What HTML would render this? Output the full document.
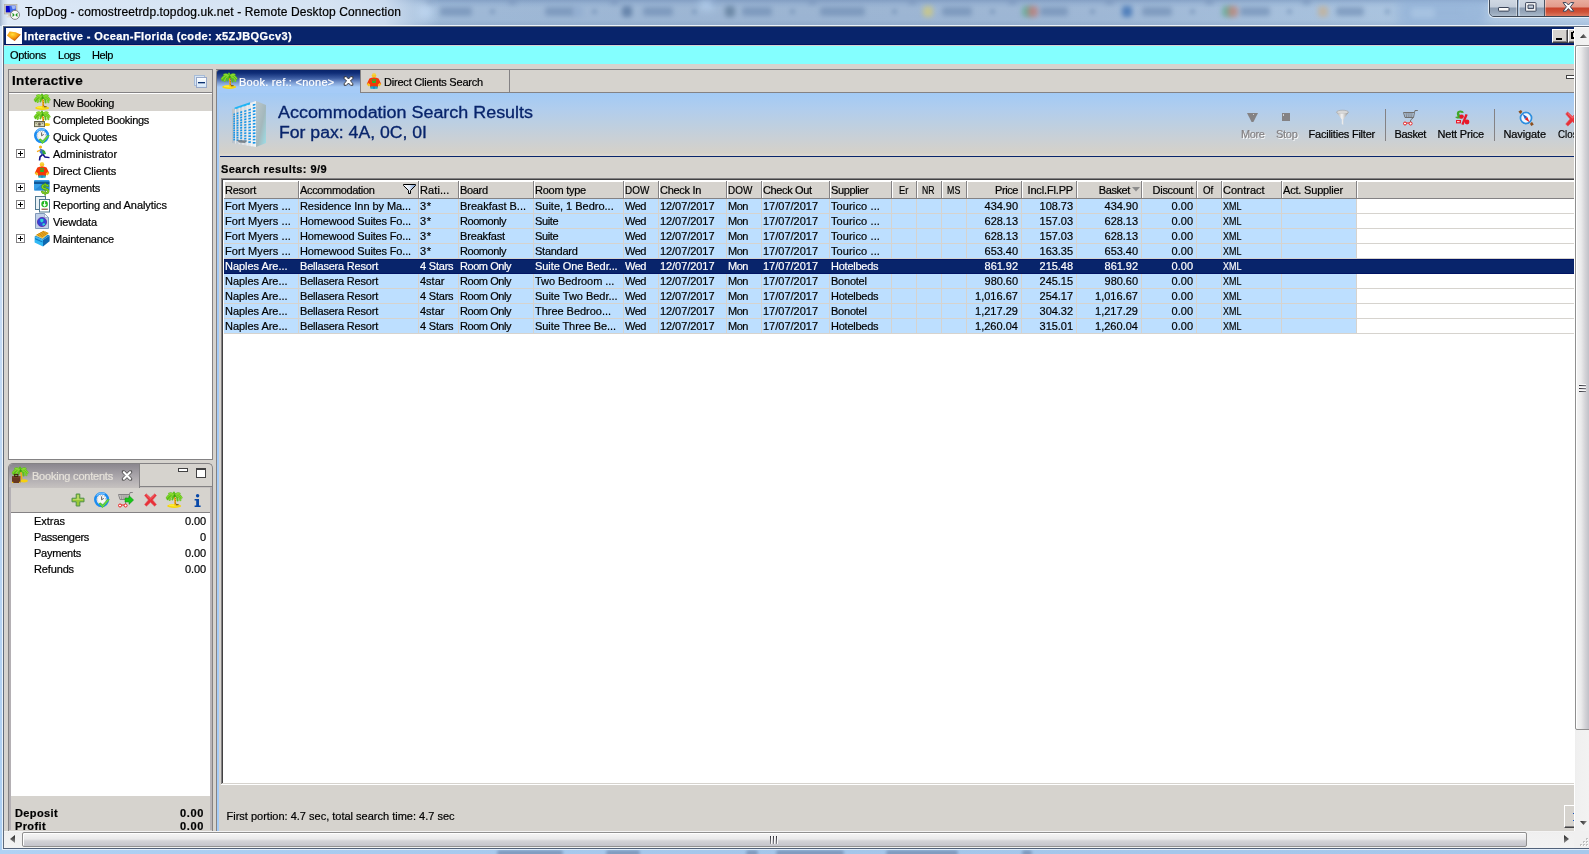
<!DOCTYPE html>
<html>
<head>
<meta charset="utf-8">
<title>TopDog</title>
<style>
*{box-sizing:border-box;margin:0;padding:0}
html,body{width:1589px;height:854px;overflow:hidden}
body{font-family:"Liberation Sans",sans-serif;font-size:11px;color:#000;background:#b4d0ee;position:relative}
#root{position:absolute;left:0;top:0;width:1589px;height:854px;overflow:hidden;will-change:transform}
.abs{position:absolute}
svg{overflow:visible}
.t{position:absolute;white-space:nowrap;line-height:14px;-webkit-text-stroke:.2px currentColor}
.btn3d{background:#d6d3ce;border:1px solid;border-color:#fff #424142 #424142 #fff;box-shadow:inset -1px -1px 0 #848284}
#aero{left:0;top:0;width:1589px;height:854px;background:linear-gradient(90deg,#b3d2f0 0px,#a9c8ea 60px,#a2bedc 300px,#9ab5d4 480px,#97b1d0 800px,#9ab4d3 1100px,#a4bfdc 1350px,#b0c9e4 1589px)}
</style>
</head>
<body>
<div id="root">
<div id="aero" class="abs"></div>
<div class="abs" style="left:0;top:0;width:1589px;height:26px;overflow:hidden">
<div class="abs" style="left:0;top:0;width:1589px;height:26px;background:linear-gradient(180deg,rgba(80,110,160,.28) 0,rgba(120,150,195,.10) 4px,rgba(255,255,255,.05) 8px,rgba(255,255,255,.04) 20px,rgba(90,120,165,.10) 25px)"></div>
<div class="abs" style="left:440px;top:7px;width:32px;height:9px;background:#6a88b0;filter:blur(2.6px);opacity:0.6;border-radius:3px"></div>
<div class="abs" style="left:545px;top:7px;width:30px;height:9px;background:#6a88b0;filter:blur(2.6px);opacity:0.6;border-radius:3px"></div>
<div class="abs" style="left:643px;top:7px;width:30px;height:9px;background:#6a88b0;filter:blur(2.6px);opacity:0.6;border-radius:3px"></div>
<div class="abs" style="left:742px;top:7px;width:30px;height:9px;background:#6a88b0;filter:blur(2.6px);opacity:0.6;border-radius:3px"></div>
<div class="abs" style="left:820px;top:7px;width:45px;height:9px;background:#6a88b0;filter:blur(2.6px);opacity:0.6;border-radius:3px"></div>
<div class="abs" style="left:942px;top:7px;width:30px;height:9px;background:#6a88b0;filter:blur(2.6px);opacity:0.6;border-radius:3px"></div>
<div class="abs" style="left:1040px;top:7px;width:28px;height:9px;background:#6a88b0;filter:blur(2.6px);opacity:0.6;border-radius:3px"></div>
<div class="abs" style="left:1142px;top:7px;width:30px;height:9px;background:#6a88b0;filter:blur(2.6px);opacity:0.6;border-radius:3px"></div>
<div class="abs" style="left:1240px;top:7px;width:30px;height:9px;background:#6a88b0;filter:blur(2.6px);opacity:0.6;border-radius:3px"></div>
<div class="abs" style="left:1336px;top:7px;width:28px;height:9px;background:#6a88b0;filter:blur(2.6px);opacity:0.6;border-radius:3px"></div>
<div class="abs" style="left:490px;top:9px;width:5px;height:5px;background:#5a7aa4;filter:blur(2px);opacity:0.45;border-radius:3px"></div>
<div class="abs" style="left:592px;top:9px;width:5px;height:5px;background:#5a7aa4;filter:blur(2px);opacity:0.45;border-radius:3px"></div>
<div class="abs" style="left:692px;top:9px;width:5px;height:5px;background:#5a7aa4;filter:blur(2px);opacity:0.45;border-radius:3px"></div>
<div class="abs" style="left:790px;top:9px;width:5px;height:5px;background:#5a7aa4;filter:blur(2px);opacity:0.45;border-radius:3px"></div>
<div class="abs" style="left:892px;top:9px;width:5px;height:5px;background:#5a7aa4;filter:blur(2px);opacity:0.45;border-radius:3px"></div>
<div class="abs" style="left:990px;top:9px;width:5px;height:5px;background:#5a7aa4;filter:blur(2px);opacity:0.45;border-radius:3px"></div>
<div class="abs" style="left:1090px;top:9px;width:5px;height:5px;background:#5a7aa4;filter:blur(2px);opacity:0.45;border-radius:3px"></div>
<div class="abs" style="left:1190px;top:9px;width:5px;height:5px;background:#5a7aa4;filter:blur(2px);opacity:0.45;border-radius:3px"></div>
<div class="abs" style="left:1287px;top:9px;width:5px;height:5px;background:#5a7aa4;filter:blur(2px);opacity:0.45;border-radius:3px"></div>
<div class="abs" style="left:1385px;top:9px;width:5px;height:5px;background:#5a7aa4;filter:blur(2px);opacity:0.45;border-radius:3px"></div>
<div class="abs" style="left:573px;top:6px;width:10px;height:11px;background:#90acd0;filter:blur(2.6px);opacity:0.7;border-radius:3px"></div>
<div class="abs" style="left:622px;top:6px;width:10px;height:11px;background:#50709a;filter:blur(2.6px);opacity:0.7;border-radius:3px"></div>
<div class="abs" style="left:725px;top:6px;width:10px;height:11px;background:#5a7896;filter:blur(2.6px);opacity:0.7;border-radius:3px"></div>
<div class="abs" style="left:923px;top:6px;width:10px;height:11px;background:#d4cc78;filter:blur(2.6px);opacity:0.7;border-radius:3px"></div>
<div class="abs" style="left:1022px;top:6px;width:10px;height:11px;background:#62a88a;filter:blur(2.6px);opacity:0.7;border-radius:3px"></div>
<div class="abs" style="left:1028px;top:6px;width:10px;height:11px;background:#c07870;filter:blur(2.6px);opacity:0.7;border-radius:3px"></div>
<div class="abs" style="left:1122px;top:6px;width:10px;height:11px;background:#3068b0;filter:blur(2.6px);opacity:0.7;border-radius:3px"></div>
<div class="abs" style="left:1222px;top:6px;width:10px;height:11px;background:#62a88a;filter:blur(2.6px);opacity:0.7;border-radius:3px"></div>
<div class="abs" style="left:1228px;top:6px;width:10px;height:11px;background:#c08070;filter:blur(2.6px);opacity:0.7;border-radius:3px"></div>
<div class="abs" style="left:1318px;top:6px;width:10px;height:11px;background:#c8b090;filter:blur(2.6px);opacity:0.7;border-radius:3px"></div>
<div class="abs" style="left:425px;top:-4px;width:9px;height:9px;background:#7f9abf;filter:blur(2.5px);opacity:0.7;border-radius:3px"></div>
<div class="abs" style="left:508px;top:-4px;width:9px;height:9px;background:#7f9abf;filter:blur(2.5px);opacity:0.7;border-radius:3px"></div>
<div class="abs" style="left:610px;top:-4px;width:9px;height:9px;background:#7f9abf;filter:blur(2.5px);opacity:0.7;border-radius:3px"></div>
<div class="abs" style="left:708px;top:-4px;width:9px;height:9px;background:#7f9abf;filter:blur(2.5px);opacity:0.7;border-radius:3px"></div>
<div class="abs" style="left:808px;top:-4px;width:9px;height:9px;background:#7f9abf;filter:blur(2.5px);opacity:0.7;border-radius:3px"></div>
<div class="abs" style="left:908px;top:-4px;width:9px;height:9px;background:#7f9abf;filter:blur(2.5px);opacity:0.7;border-radius:3px"></div>
<div class="abs" style="left:1008px;top:-4px;width:9px;height:9px;background:#7f9abf;filter:blur(2.5px);opacity:0.7;border-radius:3px"></div>
<div class="abs" style="left:1105px;top:-4px;width:9px;height:9px;background:#7f9abf;filter:blur(2.5px);opacity:0.7;border-radius:3px"></div>
<div class="abs" style="left:1205px;top:-4px;width:9px;height:9px;background:#7f9abf;filter:blur(2.5px);opacity:0.7;border-radius:3px"></div>
<div class="abs" style="left:1302px;top:-4px;width:9px;height:9px;background:#7f9abf;filter:blur(2.5px);opacity:0.7;border-radius:3px"></div>
<div class="abs" style="left:418px;top:6px;width:14px;height:12px;background:#c0daf6;filter:blur(4px);opacity:0.8;border-radius:3px"></div>
<div class="abs" style="left:700px;top:0px;width:14px;height:10px;background:#bcd8f6;filter:blur(4px);opacity:0.7;border-radius:3px"></div>
<div class="abs" style="left:1398px;top:-2px;width:88px;height:30px;background:#88aad4;filter:blur(6px);opacity:0.55;border-radius:3px"></div>
<div class="abs" style="left:1411px;top:8px;width:24px;height:10px;background:#a8c4e2;filter:blur(2.5px);opacity:0.9;border-radius:3px"></div>
<div class="abs" style="left:1462px;top:7px;width:18px;height:9px;background:#9cbadc;filter:blur(3px);opacity:0.7;border-radius:3px"></div>
<div class="abs" style="left:0;top:0;width:470px;height:26px;background:linear-gradient(90deg,rgba(226,236,248,.97) 0,rgba(220,232,246,.95) 60px,rgba(216,229,244,.95) 330px,rgba(212,226,243,.85) 385px,rgba(205,222,241,.4) 415px,rgba(200,218,240,0) 440px)"></div>
<div class="abs" style="left:0;top:0;width:8px;height:26px;background:linear-gradient(90deg,rgba(110,135,170,.55) 0,rgba(130,155,190,.25) 3px,rgba(140,165,200,0) 8px)"></div>
</div>
<svg class="abs" style="left:4px;top:4px;" width="17" height="17" viewBox="0 0 17 17"><rect x=".5" y=".5" width="12.4" height="9.4" fill="#d8d4c4" stroke="#b4b0a4" stroke-width=".8"/><rect x="1.8" y="1.8" width="9.8" height="6.6" fill="#0808c8"/><path d="M5.4 1.8 L11.6 1.8 L11.6 6 L7.4 8.4 L6.2 8.4Z" fill="#4068e8"/><path d="M7.4 1.8 L11.6 1.8 L11.6 4.4 L8.6 5.2Z" fill="#a0b8f8"/><rect x="4.4" y="10" width="3.4" height="2.2" fill="#c8c4b8"/><rect x="2.6" y="12.2" width="6" height="1.2" fill="#dcd8cc"/><circle cx="11" cy="10.9" r="4.5" fill="#f8f8f8" stroke="#848284" stroke-width="1"/><path d="M8.5 9.5 L9.9 10.9 L8.5 12.3 M13.5 9.5 L12.1 10.9 L13.5 12.3" fill="none" stroke="#189018" stroke-width="1.1"/></svg>
<div class="t" id="t1" style="top:4.84px;left:25px;font-size:12px;line-height:14px;letter-spacing:0.111px;">TopDog - comostreetrdp.topdog.uk.net - Remote Desktop Connection</div>
<div class="abs" style="left:1489px;top:-4px;width:104px;height:21px;border:1px solid #3c4654;border-radius:0 0 0 5px;box-shadow:0 0 0 1px rgba(255,255,255,.65);overflow:hidden"><div class="abs" style="left:0;top:0;width:28px;height:20px;background:linear-gradient(180deg,#d4dce6 0,#c4cedb 10px,#8c9db2 11px,#9aaabd 16px,#b4c2d2 20px);border-right:1px solid #4a5666;box-shadow:inset -1px 0 0 rgba(255,255,255,.4)"></div><div class="abs" style="left:29px;top:0;width:26px;height:20px;background:linear-gradient(180deg,#d4dce6 0,#c4cedb 10px,#8c9db2 11px,#9aaabd 16px,#b4c2d2 20px);border-right:1px solid #4a5666;box-shadow:inset 1px 0 0 rgba(255,255,255,.4)"></div><div class="abs" style="left:55px;top:0;width:50px;height:20px;background:linear-gradient(180deg,#eab5a8 0,#e39a8a 10px,#c9432c 11px,#cf5238 15px,#e0836a 20px);box-shadow:inset 1px 0 0 rgba(255,255,255,.4)"></div></div>
<svg class="abs" style="left:1498px;top:7px;" width="12" height="5" viewBox="0 0 12 5"><rect x=".5" y=".5" width="10.5" height="3.6" rx=".6" fill="#fbfbfb" stroke="#3a4458" stroke-width="1"/></svg>
<svg class="abs" style="left:1525px;top:2px;" width="12" height="10" viewBox="0 0 12 10"><path d="M.6 1.2 Q.6 .6 1.2 .6 L10.4 .6 Q11 .6 11 1.2 L11 8.6 Q11 9.2 10.4 9.2 L1.2 9.2 Q.6 9.2 .6 8.6Z M3 3 L3 6.6 L8.6 6.6 L8.6 3Z" fill="#fbfbfb" fill-rule="evenodd" stroke="#3a4458" stroke-width="1"/></svg>
<svg class="abs" style="left:1562px;top:2px;" width="13" height="10" viewBox="0 0 13 10"><path d="M1 .6 L4.2 .6 L6.4 3 L8.6 .6 L11.8 .6 L8.4 4.8 L11.8 9.2 L8.6 9.2 L6.4 6.6 L4.2 9.2 L1 9.2 L4.4 4.8Z" fill="#fbfbfb" stroke="#3a4458" stroke-width="1" stroke-linejoin="round"/></svg>
<div class="abs " style="left:0px;top:26px;width:3px;height:824px;background:linear-gradient(180deg,#d6e4f6 0,#cfe0f5 120px,#bcd6f3 450px,#aacdf1 824px);"></div>
<div class="abs " style="left:2px;top:25px;width:1px;height:824px;background:rgba(255,255,255,.75);"></div>
<div class="abs " style="left:3px;top:26px;width:1px;height:823px;background:#5f6b7c;"></div>
<div class="abs " style="left:2px;top:25px;width:1587px;height:1px;background:rgba(245,250,255,.9);"></div>
<div class="abs " style="left:3px;top:26px;width:1586px;height:1px;background:#5f6b7c;"></div>
<div class="abs " style="left:3px;top:848px;width:1586px;height:1px;background:#52627a;"></div>
<div class="abs " style="left:2px;top:849px;width:1587px;height:1px;background:rgba(235,245,255,.85);"></div>
<div class="abs" style="left:0;top:850px;width:1589px;height:4px;overflow:hidden;background:linear-gradient(90deg,#b0d2f4 0,#a9ccf0 300px,#a4c6ea 800px,#a6c8ec 1589px)">
<div class="abs" style="left:497px;top:0px;width:66px;height:6px;background:#7690b4;filter:blur(1.8px);opacity:0.8;border-radius:3px"></div>
<div class="abs" style="left:606px;top:0px;width:34px;height:6px;background:#7690b4;filter:blur(1.8px);opacity:0.8;border-radius:3px"></div>
<div class="abs" style="left:746px;top:0px;width:12px;height:6px;background:#7690b4;filter:blur(1.8px);opacity:0.8;border-radius:3px"></div>
<div class="abs" style="left:776px;top:0px;width:68px;height:6px;background:#7690b4;filter:blur(1.8px);opacity:0.8;border-radius:3px"></div>
<div class="abs" style="left:886px;top:0px;width:72px;height:6px;background:#7690b4;filter:blur(1.8px);opacity:0.8;border-radius:3px"></div>
<div class="abs" style="left:1022px;top:0px;width:10px;height:6px;background:#7690b4;filter:blur(1.8px);opacity:0.8;border-radius:3px"></div>
</div>
<div class="abs " style="left:4px;top:27px;width:1570px;height:18px;background:#08246b;"></div>
<div class="abs " style="left:6px;top:28px;width:16px;height:16px;background:#fff;"></div>
<svg class="abs" style="left:6px;top:28px;" width="16" height="16" viewBox="0 0 16 16"><defs><radialGradient id="og" cx=".4" cy=".3" r=".7"><stop offset="0" stop-color="#ffe040"/><stop offset=".5" stop-color="#f8a010"/><stop offset="1" stop-color="#c85808"/></radialGradient></defs><path d="M1 7.6 L3.6 3.6 L9.6 4.2 L14.8 6.6 L8.6 13 Q6 11.8 1 7.6Z" fill="url(#og)"/><path d="M8.6 13 L14.8 6.6 L11 9 Z" fill="#b84808" opacity=".6"/></svg>
<div class="t" id="t2" style="top:29.19px;left:24px;font-weight:bold;color:#fff;letter-spacing:0.391px;-webkit-text-stroke:.25px #fff;">Interactive - Ocean-Florida (code: x5ZJBQGcv3)</div>
<div class="abs btn3d" style="left:1552px;top:29px;width:16px;height:14px"></div>
<div class="abs " style="left:1556px;top:38px;width:6px;height:2px;background:#000;"></div>
<div class="abs" style="left:1568px;top:29px;width:6px;height:14px;overflow:hidden"><div class="abs btn3d" style="left:0;top:0;width:15px;height:14px"></div></div>
<div class="abs " style="left:1571px;top:32px;width:2px;height:7px;background:#000;"></div>
<div class="abs " style="left:1571px;top:37px;width:3px;height:2px;background:#000;"></div>
<div class="abs " style="left:1573px;top:31px;width:1px;height:2px;background:#000;"></div>
<div class="abs " style="left:4px;top:44px;width:1570px;height:1px;background:#001463;"></div>
<div class="abs " style="left:4px;top:45px;width:1570px;height:1px;background:#d6d3ce;"></div>
<div class="abs " style="left:4px;top:46px;width:1570px;height:18px;background:#84ffff;"></div>
<div class="t" id="t3" style="top:48.19px;left:10px;letter-spacing:-0.275px;">Options</div>
<div class="t" id="t4" style="top:48.19px;left:58px;letter-spacing:-0.465px;">Logs</div>
<div class="t" id="t5" style="top:48.19px;left:92px;letter-spacing:-0.406px;">Help</div>
<div class="abs " style="left:4px;top:64px;width:1570px;height:767px;background:#d6d3ce;"></div>
<div class="abs " style="left:8px;top:69px;width:205px;height:391px;background:#d6d3ce;border:1px solid #848284;"></div>
<div class="abs " style="left:9px;top:92px;width:203px;height:1px;background:#848284;"></div>
<div class="abs " style="left:9px;top:93px;width:203px;height:366px;background:#fff;"></div>
<div class="t" id="t6" style="top:73.32px;left:12px;font-size:13.5px;line-height:16px;font-weight:bold;letter-spacing:0.314px;">Interactive</div>
<div class="abs " style="left:194px;top:75px;width:11px;height:11px;background:#d8e6f4;border:1px solid #a8bcd8;"></div>
<div class="abs " style="left:196px;top:77px;width:11px;height:11px;background:linear-gradient(180deg,#fff,#d4e6f8);border:1px solid #98a8c8;"></div>
<div class="abs " style="left:198px;top:82px;width:7px;height:1px;background:#0a3070;box-shadow:0 1px 0 rgba(10,48,112,.35);"></div>
<div class="abs " style="left:9px;top:94px;width:203px;height:17px;background:#d6d3ce;"></div>
<svg class="abs" style="left:34px;top:94px;" width="16" height="16" viewBox="0 0 16 16"><ellipse cx="8.2" cy="14" rx="7" ry="1.9" fill="#f6d410"/><ellipse cx="8" cy="13.3" rx="5.2" ry="1.1" fill="#ffec30"/><path d="M7.4 4 Q8.6 8 8.4 13.4 L10.2 13.4 Q10.4 8 9 4Z" fill="#f0b010"/><path d="M8.6 5.6 L9.6 6.8 M8.8 8.2 L10 9.2 M8.8 10.8 L10.2 11.6" stroke="#b05808" stroke-width=".9"/><rect x="10" y="12.3" width="2.6" height="1" fill="#583808"/><g fill="none" stroke="#5cc018" stroke-width="2" stroke-linecap="round"><path d="M8.5 3.6 Q4 .6 .8 5.8"/><path d="M8.5 3.6 Q4.6 2.6 3.6 8"/><path d="M8.5 3.8 Q7 4.4 6.4 7.4"/><path d="M8.5 3.8 Q11.6 3 11.6 8.6"/><path d="M8.5 3.6 Q13 .6 15.6 5.6"/><path d="M8.5 3.6 Q14 3.4 14.4 8.2"/><path d="M8.5 3.4 Q6 .2 3.2 1.6"/><path d="M8.5 3.4 Q11 .2 13.6 1.6"/><path d="M8.5 3.4 Q8.6 1.4 8 .6"/><path d="M8.5 3.6 Q2.6 3.4 1.6 7.2"/></g><g fill="none" stroke="#96e038" stroke-width=".9" stroke-linecap="round"><path d="M8.5 3.6 Q4 .6 .8 5.8"/><path d="M8.5 3.6 Q4.6 2.6 3.6 8"/><path d="M8.5 3.6 Q13 .6 15.6 5.6"/><path d="M8.5 3.6 Q14 3.4 14.4 8.2"/><path d="M8.5 3.4 Q6 .2 3.2 1.6"/><path d="M8.5 3.4 Q11 .2 13.6 1.6"/></g><circle cx="8.6" cy="3.8" r="1.2" fill="#3c9c10"/></svg>
<div class="t" id="t7" style="top:96.19px;left:53px;letter-spacing:-0.348px;">New Booking</div>
<svg class="abs" style="left:34px;top:111px;" width="16" height="16" viewBox="0 0 16 16"><ellipse cx="12.6" cy="13.4" rx="3.4" ry="1.5" fill="#f6d010"/><path d="M7.4 4 Q8.6 8 8.4 12 L10.2 12 Q10.4 8 9 4Z" fill="#f0b010"/><path d="M8.6 5.6 L9.6 6.8 M8.8 8.2 L10 9.2" stroke="#b05808" stroke-width=".9"/><g fill="none" stroke="#5cc018" stroke-width="2" stroke-linecap="round"><path d="M8.5 3.6 Q4 .6 .8 5.8"/><path d="M8.5 3.6 Q4.6 2.6 3.6 8"/><path d="M8.5 3.8 Q7 4.4 6.4 7.4"/><path d="M8.5 3.8 Q11.6 3 11.6 8.6"/><path d="M8.5 3.6 Q13 .6 15.6 5.6"/><path d="M8.5 3.6 Q14 3.4 14.4 8.2"/><path d="M8.5 3.4 Q6 .2 3.2 1.6"/><path d="M8.5 3.4 Q11 .2 13.6 1.6"/><path d="M8.5 3.4 Q8.6 1.4 8 .6"/><path d="M8.5 3.6 Q2.6 3.4 1.6 7.2"/></g><g fill="none" stroke="#96e038" stroke-width=".9" stroke-linecap="round"><path d="M8.5 3.6 Q4 .6 .8 5.8"/><path d="M8.5 3.6 Q4.6 2.6 3.6 8"/><path d="M8.5 3.6 Q13 .6 15.6 5.6"/><path d="M8.5 3.6 Q14 3.4 14.4 8.2"/><path d="M8.5 3.4 Q6 .2 3.2 1.6"/><path d="M8.5 3.4 Q11 .2 13.6 1.6"/></g><circle cx="8.6" cy="3.8" r="1.2" fill="#3c9c10"/><rect x=".5" y="10.6" width="10" height="5" fill="#d4d4b4" stroke="#686850" stroke-width="1"/><rect x=".5" y="10.2" width="10" height="1" fill="#585848"/><circle cx="5.4" cy="13.2" r="1.6" fill="#807868"/><circle cx="5.4" cy="13.2" r=".6" fill="#585048"/><rect x="1.6" y="12" width="1.2" height=".8" fill="#787860"/><rect x="7.8" y="12" width="1.4" height=".8" fill="#787860"/></svg>
<div class="t" id="t8" style="top:113.19px;left:53px;letter-spacing:-0.306px;">Completed Bookings</div>
<svg class="abs" style="left:34px;top:128px;" width="16" height="16" viewBox="0 0 16 16"><circle cx="7.6" cy="7.6" r="6.3" fill="#f6f6f6" stroke="#1c8cf0" stroke-width="2.6"/><path d="M2.6 3.6 A6.3 6.3 0 0 1 11 2" fill="none" stroke="#78c0ff" stroke-width="1.2"/><circle cx="7.6" cy="7.6" r="4.1" fill="none" stroke="#909090" stroke-width=".9" stroke-dasharray=".7 1.45"/><path d="M7.6 4.4 L7.6 7.8 L9.8 6.4" fill="none" stroke="#505050" stroke-width=".9"/><path d="M4.6 11.6 L8.6 16 L15.8 7.6 L13.4 7.2 L8.6 12.8 L6.6 10.6Z" fill="#48c428"/><path d="M6 11.6 L8.6 14.4 L14.4 7.8" fill="none" stroke="#8ce860" stroke-width=".7"/></svg>
<div class="t" id="t9" style="top:130.19px;left:53px;letter-spacing:-0.220px;">Quick Quotes</div>
<svg class="abs" style="left:34px;top:145px;" width="16" height="16" viewBox="0 0 16 16"><circle cx="6.5" cy="2" r="1.6" fill="#f8b818"/><path d="M6 3.5 L10 5 L11.5 9 L8 10 L5.5 7Z" fill="#3870c8"/><path d="M8 5 L11 6 L12 9 L9 9.5Z" fill="#38a838"/><path d="M6.5 5 L3 6.6" stroke="#f8a818" stroke-width="1.2"/><path d="M8.5 9.5 L6 12 L5.5 15.5" fill="none" stroke="#101088" stroke-width="1.6"/><path d="M9 9.5 L11 12 L15.5 12.6" fill="none" stroke="#101088" stroke-width="1.4"/></svg>
<div class="t" id="t10" style="top:147.19px;left:53px;letter-spacing:-0.061px;">Administrator</div>
<svg class="abs" style="left:16px;top:149px;shape-rendering:crispEdges;" width="9" height="9" viewBox="0 0 9 9"><rect x=".5" y=".5" width="8" height="8" fill="#fff" stroke="#848284" stroke-width="1"/><path d="M2 4.5 L7 4.5 M4.5 2 L4.5 7" stroke="#000" stroke-width="1"/></svg>
<svg class="abs" style="left:34px;top:162px;" width="16" height="16" viewBox="0 0 16 16"><circle cx="8" cy="2.6" r="2.3" fill="#f8c828"/><path d="M6.4 1.6 Q8 .2 9.6 1.6" fill="none" stroke="#f8e060" stroke-width=".8"/><path d="M3.4 5.6 Q8 3.4 12.6 5.6 L15.2 11 L13 12.6 L12 10.4 L12 14.6 L4 14.6 L4 10.4 L3 12.6 L.8 11Z" fill="#f43808"/><path d="M1.4 10.6 L3.6 12.8 M14.6 10.6 L12.4 12.8" stroke="#f8c020" stroke-width="2.2"/><rect x="6.2" y="6.2" width="3.6" height="3.8" fill="#28b828"/><rect x="7" y="7" width="1.6" height="1" fill="#f43808"/><rect x="4.4" y="13.4" width="7.2" height="2.4" fill="#18b0c8"/><rect x="7.4" y="13.4" width="1.2" height="2.4" fill="#2868c8"/></svg>
<div class="t" id="t11" style="top:164.19px;left:53px;letter-spacing:-0.172px;">Direct Clients</div>
<svg class="abs" style="left:34px;top:179px;" width="17" height="17" viewBox="0 0 17 17"><rect x="0" y="1" width="15.5" height="10.5" rx="1" fill="#38a0e8"/><rect x="0" y="2.6" width="15.5" height="2.4" fill="#105898"/><path d="M0 11.5 L8 5 L15.5 5 L15.5 11.5Z" fill="#2080d0" opacity=".7"/><text x="7" y="15" font-family="Liberation Sans" font-weight="bold" font-size="15" fill="#88d818" stroke="#409010" stroke-width=".5">$</text></svg>
<div class="t" id="t12" style="top:181.19px;left:53px;letter-spacing:-0.240px;">Payments</div>
<svg class="abs" style="left:16px;top:183px;shape-rendering:crispEdges;" width="9" height="9" viewBox="0 0 9 9"><rect x=".5" y=".5" width="8" height="8" fill="#fff" stroke="#848284" stroke-width="1"/><path d="M2 4.5 L7 4.5 M4.5 2 L4.5 7" stroke="#000" stroke-width="1"/></svg>
<svg class="abs" style="left:35px;top:196px;" width="16" height="17" viewBox="0 0 16 17"><rect x=".5" y=".5" width="10" height="13" fill="#e8f0f4" stroke="#507890" stroke-width="1"/><rect x="4.5" y="3.5" width="10" height="12.5" fill="#fff" stroke="#507890" stroke-width="1"/><circle cx="9.6" cy="8" r="3.3" fill="#20b820"/><path d="M9.6 5.6 L9.6 9.6 M8 8.4 L9.6 10 L11.2 8.4" fill="none" stroke="#fff" stroke-width="1.1"/><path d="M6.5 13.2 L12.8 13.2" stroke="#703018" stroke-width="1"/></svg>
<div class="t" id="t13" style="top:198.19px;left:53px;letter-spacing:-0.069px;">Reporting and Analytics</div>
<svg class="abs" style="left:16px;top:200px;shape-rendering:crispEdges;" width="9" height="9" viewBox="0 0 9 9"><rect x=".5" y=".5" width="8" height="8" fill="#fff" stroke="#848284" stroke-width="1"/><path d="M2 4.5 L7 4.5 M4.5 2 L4.5 7" stroke="#000" stroke-width="1"/></svg>
<svg class="abs" style="left:35px;top:213px;" width="16" height="17" viewBox="0 0 16 17"><path d="M.5 .5 L9.5 .5 L13.5 4.5 L13.5 15.5 L.5 15.5Z" fill="#c0d0e8" stroke="#8098b8" stroke-width="1"/><path d="M9.5 .5 L9.5 4.5 L13.5 4.5Z" fill="#f0f4f8" stroke="#8098b8" stroke-width=".6"/><circle cx="7" cy="9" r="4.6" fill="#3048d8"/><path d="M5 6.5 Q7 5 8.5 6.5 Q9 8.5 7 9.5 Q5 9 5 6.5Z M7.5 10.5 Q9.5 10 10.5 11 Q9.5 13 7.5 12.6Z" fill="#30d8d0"/><circle cx="7" cy="9" r="4.6" fill="none" stroke="#6028a8" stroke-width=".8"/></svg>
<div class="t" id="t14" style="top:215.19px;left:53px;letter-spacing:-0.133px;">Viewdata</div>
<svg class="abs" style="left:34px;top:230px;" width="16" height="17" viewBox="0 0 16 17"><path d="M.6 6.4 L9 10 L9 16.4 L.6 12.4Z" fill="#30b8f4"/><path d="M9 10 L15.6 5.4 L15.6 11.2 L9 16.4Z" fill="#0c68b0"/><path d="M.6 6.4 L8 2 L15.6 5.4 L9 10Z" fill="#1888d0"/><path d="M1.6 5.2 L9.4 .8 L15 3 L8.6 8.4Z" fill="#f8c030"/><path d="M2.6 5 L10 1.2 M4 5.8 L11.4 1.8 M5.4 6.6 L12.8 2.4 M6.8 7.4 L14 3" stroke="#c07808" stroke-width=".8"/><path d="M1.6 5.4 L8.6 8.6 L15 3.2" fill="none" stroke="#fff4b0" stroke-width=".6"/><path d="M1 8 L8.6 11.4 L8.6 12.6 L1 9.2Z" fill="#0c78c0"/></svg>
<div class="t" id="t15" style="top:232.19px;left:53px;letter-spacing:-0.182px;">Maintenance</div>
<svg class="abs" style="left:16px;top:234px;shape-rendering:crispEdges;" width="9" height="9" viewBox="0 0 9 9"><rect x=".5" y=".5" width="8" height="8" fill="#fff" stroke="#848284" stroke-width="1"/><path d="M2 4.5 L7 4.5 M4.5 2 L4.5 7" stroke="#000" stroke-width="1"/></svg>
<div class="abs " style="left:8px;top:463px;width:205px;height:368px;background:#d6d3ce;border:1px solid #848284;border-bottom:none;border-radius:5px 5px 0 0;"></div>
<div class="abs " style="left:9px;top:464px;width:131px;height:24px;background:linear-gradient(180deg,#8a868e 0,#9f9ba1 8px,#b4b0b3 16px,#c6c2c0 24px);border-radius:4px 0 0 0;border-right:1px solid #848284;"></div>
<div class="abs " style="left:140px;top:487px;width:70px;height:1px;background:#c6c2c0;"></div>
<div class="abs " style="left:140px;top:486px;width:72px;height:1px;background:#848284;"></div>
<div class="abs " style="left:9px;top:487px;width:2px;height:343px;background:#b4b0b4;"></div>
<div class="abs " style="left:210px;top:487px;width:2px;height:343px;background:#b8b4b8;"></div>
<svg class="abs" style="left:12px;top:467px;" width="16" height="16" viewBox="0 0 16 16"><ellipse cx="12" cy="13.8" rx="3.8" ry="1.6" fill="#f6d010"/><path d="M7.8 4 Q9 8 8.8 12.6 L10.4 12.6 Q10.6 8 9.2 4Z" fill="#f0b010"/><g fill="none" stroke="#5cc018" stroke-width="2" stroke-linecap="round"><path d="M8.5 3.6 Q4 .6 .8 5.8"/><path d="M8.5 3.6 Q4.6 2.6 3.6 8"/><path d="M8.5 3.8 Q7 4.4 6.4 7.4"/><path d="M8.5 3.8 Q11.6 3 11.6 8.6"/><path d="M8.5 3.6 Q13 .6 15.6 5.6"/><path d="M8.5 3.6 Q14 3.4 14.4 8.2"/><path d="M8.5 3.4 Q6 .2 3.2 1.6"/><path d="M8.5 3.4 Q11 .2 13.6 1.6"/><path d="M8.5 3.4 Q8.6 1.4 8 .6"/><path d="M8.5 3.6 Q2.6 3.4 1.6 7.2"/></g><g fill="none" stroke="#96e038" stroke-width=".9" stroke-linecap="round"><path d="M8.5 3.6 Q4 .6 .8 5.8"/><path d="M8.5 3.6 Q4.6 2.6 3.6 8"/><path d="M8.5 3.6 Q13 .6 15.6 5.6"/><path d="M8.5 3.6 Q14 3.4 14.4 8.2"/><path d="M8.5 3.4 Q6 .2 3.2 1.6"/><path d="M8.5 3.4 Q11 .2 13.6 1.6"/></g><circle cx="8.6" cy="3.8" r="1.2" fill="#3c9c10"/><rect x="0" y="9" width="8.4" height="7" rx=".8" fill="#683820"/><rect x="0" y="9" width="8.4" height="1.4" rx=".6" fill="#7c4c30"/><rect x="2.6" y="7.4" width="3.2" height="2" fill="none" stroke="#402010" stroke-width="1"/><rect x="0" y="14.8" width="1.3" height="1.2" fill="#f8d010"/><rect x="7.1" y="14.8" width="1.3" height="1.2" fill="#f8d010"/></svg>
<div class="t" id="t16" style="top:469.19px;left:32px;color:#e6e2da;letter-spacing:-0.212px;">Booking contents</div>
<svg class="abs" style="left:121px;top:470px;" width="12" height="11" viewBox="0 0 12 11"><path d="M1.4 .8 L3.6 .8 L6 3.4 L8.4 .8 L10.6 .8 L10.6 2.8 L8 5.5 L10.6 8.2 L10.6 10.2 L8.4 10.2 L6 7.6 L3.6 10.2 L1.4 10.2 L1.4 8.2 L4 5.5 L1.4 2.8Z" fill="#fff" stroke="#424142" stroke-width=".9"/></svg>
<div class="abs " style="left:178px;top:468px;width:10px;height:4px;background:#fff;border:1px solid #424142;"></div>
<div class="abs " style="left:196px;top:468px;width:10px;height:10px;background:#fff;border:1px solid #424142;border-top-width:2px;"></div>
<div class="abs " style="left:11px;top:512px;width:199px;height:1px;background:#848284;"></div>
<svg class="abs" style="left:72px;top:494px;" width="12" height="12" viewBox="0 0 12 12"><path d="M4.2 0 L7.8 0 L7.8 4.2 L12 4.2 L12 7.8 L7.8 7.8 L7.8 12 L4.2 12 L4.2 7.8 L0 7.8 L0 4.2 L4.2 4.2Z" fill="#98c838" stroke="#509048" stroke-width="1"/><path d="M5.2 1 L6.8 1 L6.8 5.2 L11 5.2 L11 6 L1 6 L1 5.2 L5.2 5.2Z" fill="#c8e078" opacity=".8"/></svg>
<svg class="abs" style="left:94px;top:492px;" width="16" height="16" viewBox="0 0 16 16"><circle cx="7.6" cy="7.6" r="6.3" fill="#f6f6f6" stroke="#1c8cf0" stroke-width="2.6"/><path d="M2.6 3.6 A6.3 6.3 0 0 1 11 2" fill="none" stroke="#78c0ff" stroke-width="1.2"/><circle cx="7.6" cy="7.6" r="4.1" fill="none" stroke="#909090" stroke-width=".9" stroke-dasharray=".7 1.45"/><path d="M7.6 4.4 L7.6 7.8 L9.8 6.4" fill="none" stroke="#505050" stroke-width=".9"/><path d="M4.6 11.6 L8.6 16 L15.8 7.6 L13.4 7.2 L8.6 12.8 L6.6 10.6Z" fill="#48c428"/><path d="M6 11.6 L8.6 14.4 L14.4 7.8" fill="none" stroke="#8ce860" stroke-width=".7"/></svg>
<svg class="abs" style="left:118px;top:492px;" width="16" height="16" viewBox="0 0 16 16"><path d="M.5 2.5 L11.5 2.5 L10.5 7.5 L2 7.5Z" fill="none" stroke="#848284" stroke-width="1"/><path d="M3 2.5 L3.4 7.5 M5 2.5 L5.2 7.5 M7 2.5 L7 7.5 M9 2.5 L8.8 7.5" stroke="#848284" stroke-width=".9"/><path d="M11.5 2.5 L12 .5 L14.8 .5 M10.5 7.5 L7.6 10 L7.6 12" fill="none" stroke="#848284" stroke-width="1"/><path d="M2.5 13 L6.5 13" stroke="#e82020" stroke-width="1"/><circle cx="2" cy="13.5" r="1.5" fill="#fff" stroke="#e82020" stroke-width="1"/><circle cx="7.6" cy="13.5" r="1.5" fill="#fff" stroke="#e82020" stroke-width="1"/><path d="M7 6 L11 6 L11 3.6 L15.6 8 L11 12.4 L11 10 L7 10Z" fill="#18c818" stroke="#108810" stroke-width=".5"/></svg>
<svg class="abs" style="left:144px;top:493px;" width="13" height="14" viewBox="0 0 13 14"><path d="M2.2 .8 L6.5 4.8 L10.8 .8 L12.4 2.6 L8.6 7 L12.4 11.4 L10.6 13.2 L6.5 9.2 L2.4 13.2 L.6 11.4 L4.4 7 L.6 2.6Z" fill="#e83038" stroke="#e05058" stroke-width=".6"/><path d="M2.4 2 L6.5 6 L10.6 2" fill="none" stroke="#f87880" stroke-width="1" opacity=".7"/></svg>
<svg class="abs" style="left:166px;top:492px;" width="16" height="16" viewBox="0 0 16 16"><ellipse cx="8.2" cy="14" rx="7" ry="1.9" fill="#f6d410"/><ellipse cx="8" cy="13.3" rx="5.2" ry="1.1" fill="#ffec30"/><path d="M7.4 4 Q8.6 8 8.4 13.4 L10.2 13.4 Q10.4 8 9 4Z" fill="#f0b010"/><path d="M8.6 5.6 L9.6 6.8 M8.8 8.2 L10 9.2 M8.8 10.8 L10.2 11.6" stroke="#b05808" stroke-width=".9"/><rect x="10" y="12.3" width="2.6" height="1" fill="#583808"/><g fill="none" stroke="#5cc018" stroke-width="2" stroke-linecap="round"><path d="M8.5 3.6 Q4 .6 .8 5.8"/><path d="M8.5 3.6 Q4.6 2.6 3.6 8"/><path d="M8.5 3.8 Q7 4.4 6.4 7.4"/><path d="M8.5 3.8 Q11.6 3 11.6 8.6"/><path d="M8.5 3.6 Q13 .6 15.6 5.6"/><path d="M8.5 3.6 Q14 3.4 14.4 8.2"/><path d="M8.5 3.4 Q6 .2 3.2 1.6"/><path d="M8.5 3.4 Q11 .2 13.6 1.6"/><path d="M8.5 3.4 Q8.6 1.4 8 .6"/><path d="M8.5 3.6 Q2.6 3.4 1.6 7.2"/></g><g fill="none" stroke="#96e038" stroke-width=".9" stroke-linecap="round"><path d="M8.5 3.6 Q4 .6 .8 5.8"/><path d="M8.5 3.6 Q4.6 2.6 3.6 8"/><path d="M8.5 3.6 Q13 .6 15.6 5.6"/><path d="M8.5 3.6 Q14 3.4 14.4 8.2"/><path d="M8.5 3.4 Q6 .2 3.2 1.6"/><path d="M8.5 3.4 Q11 .2 13.6 1.6"/></g><circle cx="8.6" cy="3.8" r="1.2" fill="#3c9c10"/></svg>
<svg class="abs" style="left:194px;top:494px;" width="7" height="13" viewBox="0 0 7 13"><circle cx="3.6" cy="1.8" r="1.7" fill="#0848a8"/><path d="M.6 5 L5 5 L5 11.6 L6.6 11.6 L6.6 13 L.6 13 L.6 11.6 L2.2 11.6 L2.2 6.4 L.6 6.4Z" fill="#0848a8"/></svg>
<div class="abs " style="left:11px;top:513px;width:199px;height:283px;background:#fff;"></div>
<div class="t" id="t17" style="top:514.19px;left:34px;letter-spacing:-0.031px;">Extras</div>
<div class="t" id="t18" style="top:514.19px;right:1383px;letter-spacing:-0.105px;">0.00</div>
<div class="t" id="t19" style="top:530.19px;left:34px;letter-spacing:-0.309px;">Passengers</div>
<div class="t" id="t20" style="top:530.19px;right:1383px;letter-spacing:-0.125px;">0</div>
<div class="t" id="t21" style="top:546.19px;left:34px;letter-spacing:-0.240px;">Payments</div>
<div class="t" id="t22" style="top:546.19px;right:1383px;letter-spacing:-0.105px;">0.00</div>
<div class="t" id="t23" style="top:562.19px;left:34px;letter-spacing:-0.141px;">Refunds</div>
<div class="t" id="t24" style="top:562.19px;right:1383px;letter-spacing:-0.105px;">0.00</div>
<div class="t" id="t25" style="top:806.19px;left:15px;font-weight:bold;letter-spacing:0.379px;">Deposit</div>
<div class="t" id="t26" style="top:806.19px;right:1385px;font-weight:bold;letter-spacing:0.645px;">0.00</div>
<div class="t" id="t27" style="top:819.19px;left:15px;font-weight:bold;letter-spacing:0.378px;">Profit</div>
<div class="t" id="t28" style="top:819.19px;right:1385px;font-weight:bold;letter-spacing:0.645px;">0.00</div>
<div class="abs " style="left:216px;top:69px;width:1358px;height:1px;background:#848284;"></div>
<div class="abs " style="left:361px;top:92px;width:1213px;height:1px;background:#848284;"></div>
<div class="abs" style="left:216px;top:69px;width:145px;height:24px;border:1px solid #848284;border-bottom:none;border-radius:4px 0 0 0;background:linear-gradient(180deg,#08246b 0,#0f2d77 3px,#3a5aa0 8px,#7f9fd4 13px,#a5cbf7 17px,#a5cbf7 24px)"></div>
<svg class="abs" style="left:221px;top:73px;" width="16" height="16" viewBox="0 0 16 16"><ellipse cx="8.2" cy="14" rx="7" ry="1.9" fill="#f6d410"/><ellipse cx="8" cy="13.3" rx="5.2" ry="1.1" fill="#ffec30"/><path d="M7.4 4 Q8.6 8 8.4 13.4 L10.2 13.4 Q10.4 8 9 4Z" fill="#f0b010"/><path d="M8.6 5.6 L9.6 6.8 M8.8 8.2 L10 9.2 M8.8 10.8 L10.2 11.6" stroke="#b05808" stroke-width=".9"/><rect x="10" y="12.3" width="2.6" height="1" fill="#583808"/><g fill="none" stroke="#5cc018" stroke-width="2" stroke-linecap="round"><path d="M8.5 3.6 Q4 .6 .8 5.8"/><path d="M8.5 3.6 Q4.6 2.6 3.6 8"/><path d="M8.5 3.8 Q7 4.4 6.4 7.4"/><path d="M8.5 3.8 Q11.6 3 11.6 8.6"/><path d="M8.5 3.6 Q13 .6 15.6 5.6"/><path d="M8.5 3.6 Q14 3.4 14.4 8.2"/><path d="M8.5 3.4 Q6 .2 3.2 1.6"/><path d="M8.5 3.4 Q11 .2 13.6 1.6"/><path d="M8.5 3.4 Q8.6 1.4 8 .6"/><path d="M8.5 3.6 Q2.6 3.4 1.6 7.2"/></g><g fill="none" stroke="#96e038" stroke-width=".9" stroke-linecap="round"><path d="M8.5 3.6 Q4 .6 .8 5.8"/><path d="M8.5 3.6 Q4.6 2.6 3.6 8"/><path d="M8.5 3.6 Q13 .6 15.6 5.6"/><path d="M8.5 3.6 Q14 3.4 14.4 8.2"/><path d="M8.5 3.4 Q6 .2 3.2 1.6"/><path d="M8.5 3.4 Q11 .2 13.6 1.6"/></g><circle cx="8.6" cy="3.8" r="1.2" fill="#3c9c10"/></svg>
<div class="t" id="t29" style="top:75.19px;left:239px;color:#fff;letter-spacing:0.277px;">Book. ref.: &lt;none&gt;</div>
<svg class="abs" style="left:343px;top:76px;" width="11" height="10" viewBox="0 0 11 10"><path d="M1.2 .7 L3.4 .7 L5.5 3 L7.6 .7 L9.8 .7 L9.8 2.6 L7.4 5 L9.8 7.4 L9.8 9.3 L7.6 9.3 L5.5 7 L3.4 9.3 L1.2 9.3 L1.2 7.4 L3.6 5 L1.2 2.6Z" fill="#fff" stroke="#303030" stroke-width=".9"/></svg>
<div class="abs " style="left:509px;top:70px;width:1px;height:22px;background:#848284;"></div>
<svg class="abs" style="left:366px;top:73px;" width="16" height="16" viewBox="0 0 16 16"><circle cx="8" cy="2.6" r="2.3" fill="#f8c828"/><path d="M6.4 1.6 Q8 .2 9.6 1.6" fill="none" stroke="#f8e060" stroke-width=".8"/><path d="M3.4 5.6 Q8 3.4 12.6 5.6 L15.2 11 L13 12.6 L12 10.4 L12 14.6 L4 14.6 L4 10.4 L3 12.6 L.8 11Z" fill="#f43808"/><path d="M1.4 10.6 L3.6 12.8 M14.6 10.6 L12.4 12.8" stroke="#f8c020" stroke-width="2.2"/><rect x="6.2" y="6.2" width="3.6" height="3.8" fill="#28b828"/><rect x="7" y="7" width="1.6" height="1" fill="#f43808"/><rect x="4.4" y="13.4" width="7.2" height="2.4" fill="#18b0c8"/><rect x="7.4" y="13.4" width="1.2" height="2.4" fill="#2868c8"/></svg>
<div class="t" id="t30" style="top:75.19px;left:384px;letter-spacing:-0.206px;">Direct Clients Search</div>
<div class="abs" style="left:1566px;top:74px;width:8px;height:6px;overflow:hidden"><div class="abs " style="left:0px;top:1px;width:12px;height:4px;background:#fff;border:1px solid #424142;"></div></div>
<div class="abs " style="left:216px;top:93px;width:1px;height:738px;background:#848284;"></div>
<div class="abs " style="left:217px;top:93px;width:2px;height:738px;background:#a5cbf7;"></div>
<div class="abs " style="left:219px;top:93px;width:1355px;height:63px;background:linear-gradient(180deg,#a2caf5 0,#b0cdee 15px,#bccfe2 30px,#c9d0d6 45px,#d5d1c9 60px,#dfdad2 63px);"></div>
<div class="abs " style="left:217px;top:93px;width:2px;height:63px;background:#a5cbf7;"></div>
<div class="abs " style="left:220px;top:156px;width:1354px;height:1px;background:#08246b;"></div>
<svg class="abs" style="left:230px;top:99px;" width="38" height="50" viewBox="0 0 38 50"><defs><linearGradient id="bs" x1="0" x2="1" y1="0" y2="1"><stop offset="0" stop-color="#bcc6ca"/><stop offset=".55" stop-color="#a4b8bc"/><stop offset="1" stop-color="#9ce0ea"/></linearGradient><linearGradient id="bf" x1="0" x2="1"><stop offset="0" stop-color="#b8c2cc"/><stop offset=".5" stop-color="#d4dae0"/><stop offset="1" stop-color="#f4f6f8"/></linearGradient></defs><path d="M2 10 L26 2 L26 48 L2 44Z" fill="url(#bf)"/><path d="M26 2 L36 6 L36 44 L26 48Z" fill="url(#bs)"/><path d="M4.6 8.4 L20 3.2 L20 5.6 L4.6 10.6Z" fill="#20b4f4"/><rect x="3.3" y="14.7" width="1.9" height="1.6" fill="#1494e8" transform="skewY(-13)" transform-origin="3.3 14.7"/><rect x="3.3" y="16.9" width="1.9" height="1.6" fill="#1494e8" transform="skewY(-12)" transform-origin="3.3 16.9"/><rect x="3.3" y="19.2" width="1.9" height="1.6" fill="#1494e8" transform="skewY(-11)" transform-origin="3.3 19.2"/><rect x="3.3" y="21.5" width="1.9" height="1.6" fill="#1494e8" transform="skewY(-10)" transform-origin="3.3 21.5"/><rect x="3.3" y="23.8" width="1.9" height="1.6" fill="#1494e8" transform="skewY(-9)" transform-origin="3.3 23.8"/><rect x="3.3" y="26.1" width="1.9" height="1.6" fill="#1494e8" transform="skewY(-8)" transform-origin="3.3 26.1"/><rect x="3.3" y="28.4" width="1.9" height="1.6" fill="#1494e8" transform="skewY(-8)" transform-origin="3.3 28.4"/><rect x="3.3" y="30.7" width="1.9" height="1.6" fill="#1494e8" transform="skewY(-7)" transform-origin="3.3 30.7"/><rect x="3.3" y="33.0" width="1.9" height="1.6" fill="#1494e8" transform="skewY(-6)" transform-origin="3.3 33.0"/><rect x="3.3" y="35.2" width="1.9" height="1.6" fill="#1494e8" transform="skewY(-5)" transform-origin="3.3 35.2"/><rect x="3.3" y="37.5" width="1.9" height="1.6" fill="#1494e8" transform="skewY(-4)" transform-origin="3.3 37.5"/><rect x="3.3" y="39.8" width="1.9" height="1.6" fill="#1494e8" transform="skewY(-3)" transform-origin="3.3 39.8"/><rect x="6.6" y="13.7" width="2.0" height="1.6" fill="#1494e8" transform="skewY(-13)" transform-origin="6.6 13.7"/><rect x="6.6" y="16.1" width="2.0" height="1.6" fill="#1494e8" transform="skewY(-12)" transform-origin="6.6 16.1"/><rect x="6.6" y="18.5" width="2.0" height="1.6" fill="#1494e8" transform="skewY(-11)" transform-origin="6.6 18.5"/><rect x="6.6" y="21.0" width="2.0" height="1.6" fill="#1494e8" transform="skewY(-10)" transform-origin="6.6 21.0"/><rect x="6.6" y="23.4" width="2.0" height="1.6" fill="#1494e8" transform="skewY(-9)" transform-origin="6.6 23.4"/><rect x="6.6" y="25.8" width="2.0" height="1.6" fill="#1494e8" transform="skewY(-8)" transform-origin="6.6 25.8"/><rect x="6.6" y="28.2" width="2.0" height="1.6" fill="#1494e8" transform="skewY(-8)" transform-origin="6.6 28.2"/><rect x="6.6" y="30.7" width="2.0" height="1.6" fill="#1494e8" transform="skewY(-7)" transform-origin="6.6 30.7"/><rect x="6.6" y="33.1" width="2.0" height="1.6" fill="#1494e8" transform="skewY(-6)" transform-origin="6.6 33.1"/><rect x="6.6" y="35.5" width="2.0" height="1.6" fill="#1494e8" transform="skewY(-5)" transform-origin="6.6 35.5"/><rect x="6.6" y="37.9" width="2.0" height="1.6" fill="#1494e8" transform="skewY(-4)" transform-origin="6.6 37.9"/><rect x="6.6" y="40.4" width="2.0" height="1.6" fill="#1494e8" transform="skewY(-3)" transform-origin="6.6 40.4"/><rect x="10.2" y="12.6" width="2.1" height="1.6" fill="#1494e8" transform="skewY(-13)" transform-origin="10.2 12.6"/><rect x="10.2" y="15.2" width="2.1" height="1.6" fill="#1494e8" transform="skewY(-12)" transform-origin="10.2 15.2"/><rect x="10.2" y="17.8" width="2.1" height="1.6" fill="#1494e8" transform="skewY(-11)" transform-origin="10.2 17.8"/><rect x="10.2" y="20.4" width="2.1" height="1.6" fill="#1494e8" transform="skewY(-10)" transform-origin="10.2 20.4"/><rect x="10.2" y="22.9" width="2.1" height="1.6" fill="#1494e8" transform="skewY(-9)" transform-origin="10.2 22.9"/><rect x="10.2" y="25.5" width="2.1" height="1.6" fill="#1494e8" transform="skewY(-8)" transform-origin="10.2 25.5"/><rect x="10.2" y="28.1" width="2.1" height="1.6" fill="#1494e8" transform="skewY(-8)" transform-origin="10.2 28.1"/><rect x="10.2" y="30.7" width="2.1" height="1.6" fill="#1494e8" transform="skewY(-7)" transform-origin="10.2 30.7"/><rect x="10.2" y="33.2" width="2.1" height="1.6" fill="#1494e8" transform="skewY(-6)" transform-origin="10.2 33.2"/><rect x="10.2" y="35.8" width="2.1" height="1.6" fill="#1494e8" transform="skewY(-5)" transform-origin="10.2 35.8"/><rect x="10.2" y="38.4" width="2.1" height="1.6" fill="#1494e8" transform="skewY(-4)" transform-origin="10.2 38.4"/><rect x="10.2" y="41.0" width="2.1" height="1.6" fill="#1494e8" transform="skewY(-3)" transform-origin="10.2 41.0"/><rect x="14.2" y="11.5" width="2.3" height="1.6" fill="#1494e8" transform="skewY(-13)" transform-origin="14.2 11.5"/><rect x="14.2" y="14.2" width="2.3" height="1.6" fill="#1494e8" transform="skewY(-12)" transform-origin="14.2 14.2"/><rect x="14.2" y="17.0" width="2.3" height="1.6" fill="#1494e8" transform="skewY(-11)" transform-origin="14.2 17.0"/><rect x="14.2" y="19.7" width="2.3" height="1.6" fill="#1494e8" transform="skewY(-10)" transform-origin="14.2 19.7"/><rect x="14.2" y="22.4" width="2.3" height="1.6" fill="#1494e8" transform="skewY(-9)" transform-origin="14.2 22.4"/><rect x="14.2" y="25.2" width="2.3" height="1.6" fill="#1494e8" transform="skewY(-8)" transform-origin="14.2 25.2"/><rect x="14.2" y="27.9" width="2.3" height="1.6" fill="#1494e8" transform="skewY(-8)" transform-origin="14.2 27.9"/><rect x="14.2" y="30.7" width="2.3" height="1.6" fill="#1494e8" transform="skewY(-7)" transform-origin="14.2 30.7"/><rect x="14.2" y="33.4" width="2.3" height="1.6" fill="#1494e8" transform="skewY(-6)" transform-origin="14.2 33.4"/><rect x="14.2" y="36.2" width="2.3" height="1.6" fill="#1494e8" transform="skewY(-5)" transform-origin="14.2 36.2"/><rect x="14.2" y="38.9" width="2.3" height="1.6" fill="#1494e8" transform="skewY(-4)" transform-origin="14.2 38.9"/><rect x="14.2" y="41.6" width="2.3" height="1.6" fill="#1494e8" transform="skewY(-3)" transform-origin="14.2 41.6"/><rect x="18.4" y="10.2" width="2.5" height="1.6" fill="#1494e8" transform="skewY(-13)" transform-origin="18.4 10.2"/><rect x="18.4" y="13.2" width="2.5" height="1.6" fill="#1494e8" transform="skewY(-12)" transform-origin="18.4 13.2"/><rect x="18.4" y="16.1" width="2.5" height="1.6" fill="#1494e8" transform="skewY(-11)" transform-origin="18.4 16.1"/><rect x="18.4" y="19.0" width="2.5" height="1.6" fill="#1494e8" transform="skewY(-10)" transform-origin="18.4 19.0"/><rect x="18.4" y="21.9" width="2.5" height="1.6" fill="#1494e8" transform="skewY(-9)" transform-origin="18.4 21.9"/><rect x="18.4" y="24.8" width="2.5" height="1.6" fill="#1494e8" transform="skewY(-8)" transform-origin="18.4 24.8"/><rect x="18.4" y="27.8" width="2.5" height="1.6" fill="#1494e8" transform="skewY(-8)" transform-origin="18.4 27.8"/><rect x="18.4" y="30.7" width="2.5" height="1.6" fill="#1494e8" transform="skewY(-7)" transform-origin="18.4 30.7"/><rect x="18.4" y="33.6" width="2.5" height="1.6" fill="#1494e8" transform="skewY(-6)" transform-origin="18.4 33.6"/><rect x="18.4" y="36.5" width="2.5" height="1.6" fill="#1494e8" transform="skewY(-5)" transform-origin="18.4 36.5"/><rect x="18.4" y="39.4" width="2.5" height="1.6" fill="#1494e8" transform="skewY(-4)" transform-origin="18.4 39.4"/><rect x="18.4" y="42.3" width="2.5" height="1.6" fill="#1494e8" transform="skewY(-3)" transform-origin="18.4 42.3"/><rect x="22.8" y="5.3" width="2.7" height="1.6" fill="#1494e8" transform="skewY(-14)" transform-origin="22.8 5.3"/><rect x="22.8" y="8.4" width="2.7" height="1.6" fill="#1494e8" transform="skewY(-13)" transform-origin="22.8 8.4"/><rect x="22.8" y="11.6" width="2.7" height="1.6" fill="#1494e8" transform="skewY(-12)" transform-origin="22.8 11.6"/><rect x="22.8" y="14.7" width="2.7" height="1.6" fill="#1494e8" transform="skewY(-11)" transform-origin="22.8 14.7"/><rect x="22.8" y="17.9" width="2.7" height="1.6" fill="#1494e8" transform="skewY(-10)" transform-origin="22.8 17.9"/><rect x="22.8" y="21.0" width="2.7" height="1.6" fill="#1494e8" transform="skewY(-9)" transform-origin="22.8 21.0"/><rect x="22.8" y="24.2" width="2.7" height="1.6" fill="#1494e8" transform="skewY(-8)" transform-origin="22.8 24.2"/><rect x="22.8" y="27.3" width="2.7" height="1.6" fill="#1494e8" transform="skewY(-8)" transform-origin="22.8 27.3"/><rect x="22.8" y="30.5" width="2.7" height="1.6" fill="#1494e8" transform="skewY(-7)" transform-origin="22.8 30.5"/><rect x="22.8" y="33.6" width="2.7" height="1.6" fill="#1494e8" transform="skewY(-6)" transform-origin="22.8 33.6"/><rect x="22.8" y="36.8" width="2.7" height="1.6" fill="#1494e8" transform="skewY(-5)" transform-origin="22.8 36.8"/><rect x="22.8" y="39.9" width="2.7" height="1.6" fill="#1494e8" transform="skewY(-4)" transform-origin="22.8 39.9"/><rect x="22.8" y="43.1" width="2.7" height="1.6" fill="#1494e8" transform="skewY(-3)" transform-origin="22.8 43.1"/><path d="M5.6 9.8 L5.6 44.6" stroke="#f4f6f8" stroke-width=".8"/><path d="M9.2 8.6 L9.2 45.2" stroke="#f4f6f8" stroke-width=".8"/><path d="M13.0 7.3 L13.0 45.8" stroke="#f4f6f8" stroke-width=".8"/><path d="M17.2 5.9 L17.2 46.5" stroke="#f4f6f8" stroke-width=".8"/><path d="M21.6 4.5 L21.6 47.3" stroke="#f4f6f8" stroke-width=".8"/><path d="M7 41 L17 41.6 L15 44 L9 43.6Z" fill="#7c848c"/></svg>
<div class="t" id="t31" style="top:102.46px;left:278px;font-size:16px;line-height:22px;color:#08246b;transform:scaleX(1.1201);transform-origin:0 0;-webkit-text-stroke:.3px #08246b;">Accommodation Search Results</div>
<div class="t" id="t32" style="top:122.46px;left:279px;font-size:16px;line-height:22px;color:#08246b;transform:scaleX(1.1022);transform-origin:0 0;-webkit-text-stroke:.3px #08246b;">For pax: 4A, 0C, 0I</div>
<svg class="abs" style="left:1247px;top:113px;" width="11" height="9" viewBox="0 0 11 9"><path d="M0 0 L11 0 L6.4 9 L4.6 9Z" fill="#848284"/><rect x="6" y="1" width="1" height="1" fill="#d0d0d0"/></svg>
<div class="t" id="t33" style="top:127.19px;left:1241px;color:#848284;letter-spacing:-0.391px;text-shadow:1px 1px 0 #fff;">More</div>
<svg class="abs" style="left:1282px;top:113px;" width="8" height="8" viewBox="0 0 8 8"><rect width="8" height="8" fill="#848284"/><rect x="1" y="1" width="1" height="2" fill="#d0d0d0"/></svg>
<div class="t" id="t34" style="top:127.19px;left:1276px;color:#848284;letter-spacing:-0.285px;text-shadow:1px 1px 0 #fff;">Stop</div>
<svg class="abs" style="left:1336px;top:110px;" width="13" height="16" viewBox="0 0 13 16"><defs><linearGradient id="fg" x1="0" x2="1"><stop offset="0" stop-color="#a8a8a8"/><stop offset=".45" stop-color="#f4f4f4"/><stop offset="1" stop-color="#909090"/></linearGradient></defs><ellipse cx="6.5" cy="2.2" rx="6" ry="2" fill="#d8d8d8" stroke="#a0a0a0" stroke-width=".6"/><path d="M.5 2.4 Q6.5 5 12.5 2.4 L7.4 9.5 L7.4 15 L5.8 14 L5.8 9.5Z" fill="url(#fg)"/></svg>
<div class="t" id="t35" style="top:127.19px;left:1308.5px;letter-spacing:-0.223px;">Facilities Filter</div>
<div class="abs " style="left:1385px;top:109px;width:1px;height:32px;background:#848284;"></div>
<svg class="abs" style="left:1403px;top:110px;" width="16" height="16" viewBox="0 0 16 16"><path d="M.5 2.5 L11.5 2.5 L10.5 7.5 L2 7.5Z" fill="none" stroke="#707070" stroke-width="1"/><path d="M3 2.5 L3.4 7.5 M5 2.5 L5.2 7.5 M7 2.5 L7 7.5 M9 2.5 L8.8 7.5" stroke="#707070" stroke-width=".9"/><path d="M11.5 2.5 L12 .5 L14.8 .5 M10.5 7.5 L7.6 10 L7.6 12" fill="none" stroke="#707070" stroke-width="1"/><path d="M2.5 13 L6.5 13" stroke="#e82020" stroke-width="1"/><circle cx="2" cy="13.5" r="1.5" fill="#fff" stroke="#e82020" stroke-width="1"/><circle cx="7.6" cy="13.5" r="1.5" fill="#fff" stroke="#e82020" stroke-width="1"/></svg>
<div class="t" id="t36" style="top:127.19px;left:1394.5px;letter-spacing:-0.357px;">Basket</div>
<svg class="abs" style="left:1454px;top:110px;" width="16" height="16" viewBox="0 0 16 16"><path d="M3 5 Q2 1 6 .6 Q9 .4 10 2.4 L8 3 Q7 2 5.6 2.6 Q4.6 3.4 5.6 4.6 L8 5.6 Q9 7 7.6 8.4 L3 8.6 L1 7 L3.6 6.6Z" fill="#40a828"/><circle cx="7.6" cy="6.6" r="2.2" fill="#e81828"/><circle cx="13" cy="12" r="2.4" fill="#e81828"/><path d="M12.6 4.4 L8.4 14.6" stroke="#e81828" stroke-width="2.4"/><rect x="2" y="10" width="5" height="3.4" fill="#e81828"/><rect x="3" y="11.2" width="2.6" height="1" fill="#fff"/></svg>
<div class="t" id="t37" style="top:127.19px;left:1437.5px;letter-spacing:-0.180px;">Nett Price</div>
<div class="abs " style="left:1494px;top:109px;width:1px;height:32px;background:#848284;"></div>
<svg class="abs" style="left:1518px;top:110px;" width="16" height="16" viewBox="0 0 16 16"><path d="M.4 1.6 L3 0 L5.4 3.4 L3 5Z M11 12.6 L13.4 11 L15.8 14.6 L13.4 16Z" fill="#8c5020"/><circle cx="8" cy="8" r="6.9" fill="#d0d8e0"/><circle cx="8" cy="8" r="5.6" fill="#f0f8ff" stroke="#3090e0" stroke-width="1.8"/><path d="M4.6 4 L9.3 6.9 L6.9 9.3Z" fill="#2060c8"/><path d="M11.6 12.2 L6.9 9.3 L9.3 6.9Z" fill="#e82020"/></svg>
<div class="t" id="t38" style="top:127.19px;left:1503.5px;letter-spacing:-0.115px;">Navigate</div>
<div class="abs" style="left:1555px;top:100px;width:19px;height:50px;overflow:hidden"><svg class="abs" style="left:10px;top:11px;" width="15" height="16" viewBox="0 0 13 14"><path d="M2.2 .8 L6.5 4.8 L10.8 .8 L12.4 2.6 L8.6 7 L12.4 11.4 L10.6 13.2 L6.5 9.2 L2.4 13.2 L.6 11.4 L4.4 7 L.6 2.6Z" fill="#e83038" stroke="#e05058" stroke-width=".6"/><path d="M2.4 2 L6.5 6 L10.6 2" fill="none" stroke="#f87880" stroke-width="1" opacity=".7"/></svg><div class="t" id="t39" style="top:27.19px;left:2.5px;transform:scaleX(0.8889);transform-origin:0 0;">Close</div></div>
<div class="t" id="t40" style="top:162.19px;left:221px;font-weight:bold;letter-spacing:0.429px;">Search results: 9/9</div>
<div class="abs " style="left:221px;top:178px;width:1353px;height:607px;background:#fff;"></div>
<div class="abs " style="left:221px;top:178px;width:1353px;height:1px;background:#848284;"></div>
<div class="abs " style="left:221px;top:178px;width:1px;height:606px;background:#848284;"></div>
<div class="abs " style="left:222px;top:179px;width:1352px;height:1px;background:#424142;"></div>
<div class="abs " style="left:222px;top:179px;width:1px;height:604px;background:#424142;"></div>
<div class="abs " style="left:222px;top:783px;width:1352px;height:1px;background:#d6d3ce;"></div>
<div class="abs " style="left:224px;top:182px;width:1350px;height:16px;background:#d6d3ce;"></div>
<div class="abs " style="left:224px;top:198px;width:1350px;height:1px;background:#848284;"></div>
<div class="abs " style="left:224px;top:182px;width:1px;height:16px;background:#fff;"></div>
<div class="abs " style="left:298px;top:181px;width:1px;height:18px;background:#848284;"></div>
<div class="t" id="t41" style="top:183.19px;left:225px;letter-spacing:-0.234px;">Resort</div>
<div class="abs " style="left:299px;top:182px;width:1px;height:16px;background:#fff;"></div>
<div class="abs " style="left:418px;top:181px;width:1px;height:18px;background:#848284;"></div>
<div class="t" id="t42" style="top:183.19px;left:300px;letter-spacing:-0.337px;">Accommodation</div>
<div class="abs " style="left:419px;top:182px;width:1px;height:16px;background:#fff;"></div>
<div class="abs " style="left:458px;top:181px;width:1px;height:18px;background:#848284;"></div>
<div class="t" id="t43" style="top:183.19px;left:420px;letter-spacing:0.095px;">Rati...</div>
<div class="abs " style="left:459px;top:182px;width:1px;height:16px;background:#fff;"></div>
<div class="abs " style="left:533px;top:181px;width:1px;height:18px;background:#848284;"></div>
<div class="t" id="t44" style="top:183.19px;left:460px;letter-spacing:-0.332px;">Board</div>
<div class="abs " style="left:534px;top:182px;width:1px;height:16px;background:#fff;"></div>
<div class="abs " style="left:623px;top:181px;width:1px;height:18px;background:#848284;"></div>
<div class="t" id="t45" style="top:183.19px;left:535px;letter-spacing:-0.245px;">Room type</div>
<div class="abs " style="left:624px;top:182px;width:1px;height:16px;background:#fff;"></div>
<div class="abs " style="left:658px;top:181px;width:1px;height:18px;background:#848284;"></div>
<div class="t" id="t46" style="top:183.19px;left:625px;transform:scaleX(0.9037);transform-origin:0 0;">DOW</div>
<div class="abs " style="left:659px;top:182px;width:1px;height:16px;background:#fff;"></div>
<div class="abs " style="left:726px;top:181px;width:1px;height:18px;background:#848284;"></div>
<div class="t" id="t47" style="top:183.19px;left:660px;letter-spacing:-0.303px;">Check In</div>
<div class="abs " style="left:727px;top:182px;width:1px;height:16px;background:#fff;"></div>
<div class="abs " style="left:761px;top:181px;width:1px;height:18px;background:#848284;"></div>
<div class="t" id="t48" style="top:183.19px;left:728px;transform:scaleX(0.9037);transform-origin:0 0;">DOW</div>
<div class="abs " style="left:762px;top:182px;width:1px;height:16px;background:#fff;"></div>
<div class="abs " style="left:829px;top:181px;width:1px;height:18px;background:#848284;"></div>
<div class="t" id="t49" style="top:183.19px;left:763px;letter-spacing:-0.363px;">Check Out</div>
<div class="abs " style="left:830px;top:182px;width:1px;height:16px;background:#fff;"></div>
<div class="abs " style="left:891px;top:181px;width:1px;height:18px;background:#848284;"></div>
<div class="t" id="t50" style="top:183.19px;left:831px;letter-spacing:-0.370px;">Supplier</div>
<div class="abs " style="left:892px;top:182px;width:1px;height:16px;background:#fff;"></div>
<div class="abs " style="left:916px;top:181px;width:1px;height:18px;background:#848284;"></div>
<div class="t" id="t51" style="top:183.19px;left:898.85px;transform:scaleX(0.8455);transform-origin:0 0;">Er</div>
<div class="abs " style="left:917px;top:182px;width:1px;height:16px;background:#fff;"></div>
<div class="abs " style="left:941px;top:181px;width:1px;height:18px;background:#848284;"></div>
<div class="t" id="t52" style="top:183.19px;left:922.25px;transform:scaleX(0.7866);transform-origin:0 0;">NR</div>
<div class="abs " style="left:942px;top:182px;width:1px;height:16px;background:#fff;"></div>
<div class="abs " style="left:966px;top:181px;width:1px;height:18px;background:#848284;"></div>
<div class="t" id="t53" style="top:183.19px;left:946.85px;transform:scaleX(0.8061);transform-origin:0 0;">MS</div>
<div class="abs " style="left:967px;top:182px;width:1px;height:16px;background:#fff;"></div>
<div class="abs " style="left:1021px;top:181px;width:1px;height:18px;background:#848284;"></div>
<div class="t" id="t54" style="top:183.19px;right:571px;letter-spacing:-0.412px;">Price</div>
<div class="abs " style="left:1022px;top:182px;width:1px;height:16px;background:#fff;"></div>
<div class="abs " style="left:1076px;top:181px;width:1px;height:18px;background:#848284;"></div>
<div class="t" id="t55" style="top:183.19px;right:516px;letter-spacing:-0.158px;">Incl.Fl.PP</div>
<div class="abs " style="left:1077px;top:182px;width:1px;height:16px;background:#fff;"></div>
<div class="abs " style="left:1141px;top:181px;width:1px;height:18px;background:#848284;"></div>
<div class="t" id="t56" style="top:183.19px;right:459px;letter-spacing:-0.390px;">Basket</div>
<div class="abs " style="left:1142px;top:182px;width:1px;height:16px;background:#fff;"></div>
<div class="abs " style="left:1196px;top:181px;width:1px;height:18px;background:#848284;"></div>
<div class="t" id="t57" style="top:183.19px;right:396px;letter-spacing:-0.300px;">Discount</div>
<div class="abs " style="left:1197px;top:182px;width:1px;height:16px;background:#fff;"></div>
<div class="abs " style="left:1221px;top:181px;width:1px;height:18px;background:#848284;"></div>
<div class="t" id="t58" style="top:183.19px;left:1203.35px;transform:scaleX(0.8860);transform-origin:0 0;">Of</div>
<div class="abs " style="left:1222px;top:182px;width:1px;height:16px;background:#fff;"></div>
<div class="abs " style="left:1281px;top:181px;width:1px;height:18px;background:#848284;"></div>
<div class="t" id="t59" style="top:183.19px;left:1223px;">Contract</div>
<div class="abs " style="left:1282px;top:182px;width:1px;height:16px;background:#fff;"></div>
<div class="abs " style="left:1356px;top:181px;width:1px;height:18px;background:#848284;"></div>
<div class="t" id="t60" style="top:183.19px;left:1283px;letter-spacing:-0.183px;">Act. Supplier</div>
<div class="abs " style="left:1357px;top:182px;width:1px;height:16px;background:#fff;"></div>
<svg class="abs" style="left:403px;top:184px;" width="13" height="10" viewBox="0 0 13 10"><defs><linearGradient id="flt" x1="0" x2="1"><stop offset="0" stop-color="#fff"/><stop offset=".5" stop-color="#e0e8f4"/><stop offset="1" stop-color="#7098d0"/></linearGradient></defs><path d="M.5 .5 L12.5 .5 L12.5 1.5 L7.5 6.5 L7.5 9.5 L5.5 9.5 L5.5 6.5 L.5 1.5Z" fill="url(#flt)" stroke="#000" stroke-width="1"/></svg>
<svg class="abs" style="left:1132px;top:187px;" width="8" height="5" viewBox="0 0 8 5"><path d="M0 0 L8 0 L4 4.6Z" fill="#8c8c8c"/></svg>
<div class="abs " style="left:224px;top:199px;width:1133px;height:14px;background:#bddfff;"></div>
<div class="abs " style="left:224px;top:213px;width:1350px;height:1px;background:#d6d3ce;"></div>
<div class="t" id="t61" style="top:199.19px;left:225px;letter-spacing:0.087px;">Fort Myers ...</div>
<div class="t" id="t62" style="top:199.19px;left:300px;letter-spacing:-0.069px;">Residence Inn by Ma...</div>
<div class="t" id="t63" style="top:199.19px;left:420px;letter-spacing:0.647px;">3*</div>
<div class="t" id="t64" style="top:199.19px;left:460px;">Breakfast B...</div>
<div class="t" id="t65" style="top:199.19px;left:535px;letter-spacing:-0.011px;">Suite, 1 Bedro...</div>
<div class="t" id="t66" style="top:199.19px;left:625px;letter-spacing:-0.474px;">Wed</div>
<div class="t" id="t67" style="top:199.19px;left:660px;letter-spacing:-0.056px;">12/07/2017</div>
<div class="t" id="t68" style="top:199.19px;left:728px;letter-spacing:-0.469px;">Mon</div>
<div class="t" id="t69" style="top:199.19px;left:763px;letter-spacing:-0.006px;">17/07/2017</div>
<div class="t" id="t70" style="top:199.19px;left:831px;letter-spacing:0.119px;">Tourico ...</div>
<div class="t" id="t71" style="top:199.19px;left:1223px;transform:scaleX(0.8133);transform-origin:0 0;">XML</div>
<div class="t" id="t72" style="top:199.19px;right:571px;letter-spacing:-0.043px;">434.90</div>
<div class="t" id="t73" style="top:199.19px;right:516px;letter-spacing:-0.043px;">108.73</div>
<div class="t" id="t74" style="top:199.19px;right:451px;letter-spacing:-0.043px;">434.90</div>
<div class="t" id="t75" style="top:199.19px;right:396px;letter-spacing:-0.005px;">0.00</div>
<div class="abs " style="left:224px;top:214px;width:1133px;height:14px;background:#bddfff;"></div>
<div class="abs " style="left:224px;top:228px;width:1350px;height:1px;background:#d6d3ce;"></div>
<div class="t" id="t76" style="top:214.19px;left:225px;letter-spacing:0.087px;">Fort Myers ...</div>
<div class="t" id="t77" style="top:214.19px;left:300px;letter-spacing:-0.159px;">Homewood Suites Fo...</div>
<div class="t" id="t78" style="top:214.19px;left:420px;letter-spacing:0.647px;">3*</div>
<div class="t" id="t79" style="top:214.19px;left:460px;letter-spacing:-0.441px;">Roomonly</div>
<div class="t" id="t80" style="top:214.19px;left:535px;letter-spacing:-0.356px;">Suite</div>
<div class="t" id="t81" style="top:214.19px;left:625px;letter-spacing:-0.474px;">Wed</div>
<div class="t" id="t82" style="top:214.19px;left:660px;letter-spacing:-0.056px;">12/07/2017</div>
<div class="t" id="t83" style="top:214.19px;left:728px;letter-spacing:-0.469px;">Mon</div>
<div class="t" id="t84" style="top:214.19px;left:763px;letter-spacing:-0.006px;">17/07/2017</div>
<div class="t" id="t85" style="top:214.19px;left:831px;letter-spacing:0.119px;">Tourico ...</div>
<div class="t" id="t86" style="top:214.19px;left:1223px;transform:scaleX(0.8133);transform-origin:0 0;">XML</div>
<div class="t" id="t87" style="top:214.19px;right:571px;letter-spacing:-0.043px;">628.13</div>
<div class="t" id="t88" style="top:214.19px;right:516px;letter-spacing:-0.043px;">157.03</div>
<div class="t" id="t89" style="top:214.19px;right:451px;letter-spacing:-0.043px;">628.13</div>
<div class="t" id="t90" style="top:214.19px;right:396px;letter-spacing:-0.005px;">0.00</div>
<div class="abs " style="left:224px;top:229px;width:1133px;height:14px;background:#bddfff;"></div>
<div class="abs " style="left:224px;top:243px;width:1350px;height:1px;background:#d6d3ce;"></div>
<div class="t" id="t91" style="top:229.19px;left:225px;letter-spacing:0.087px;">Fort Myers ...</div>
<div class="t" id="t92" style="top:229.19px;left:300px;letter-spacing:-0.159px;">Homewood Suites Fo...</div>
<div class="t" id="t93" style="top:229.19px;left:420px;letter-spacing:0.647px;">3*</div>
<div class="t" id="t94" style="top:229.19px;left:460px;letter-spacing:-0.163px;">Breakfast</div>
<div class="t" id="t95" style="top:229.19px;left:535px;letter-spacing:-0.356px;">Suite</div>
<div class="t" id="t96" style="top:229.19px;left:625px;letter-spacing:-0.474px;">Wed</div>
<div class="t" id="t97" style="top:229.19px;left:660px;letter-spacing:-0.056px;">12/07/2017</div>
<div class="t" id="t98" style="top:229.19px;left:728px;letter-spacing:-0.469px;">Mon</div>
<div class="t" id="t99" style="top:229.19px;left:763px;letter-spacing:-0.006px;">17/07/2017</div>
<div class="t" id="t100" style="top:229.19px;left:831px;letter-spacing:0.119px;">Tourico ...</div>
<div class="t" id="t101" style="top:229.19px;left:1223px;transform:scaleX(0.8133);transform-origin:0 0;">XML</div>
<div class="t" id="t102" style="top:229.19px;right:571px;letter-spacing:-0.043px;">628.13</div>
<div class="t" id="t103" style="top:229.19px;right:516px;letter-spacing:-0.043px;">157.03</div>
<div class="t" id="t104" style="top:229.19px;right:451px;letter-spacing:-0.043px;">628.13</div>
<div class="t" id="t105" style="top:229.19px;right:396px;letter-spacing:-0.005px;">0.00</div>
<div class="abs " style="left:224px;top:244px;width:1133px;height:14px;background:#bddfff;"></div>
<div class="abs " style="left:224px;top:258px;width:1350px;height:1px;background:#d6d3ce;"></div>
<div class="t" id="t106" style="top:244.19px;left:225px;letter-spacing:0.087px;">Fort Myers ...</div>
<div class="t" id="t107" style="top:244.19px;left:300px;letter-spacing:-0.159px;">Homewood Suites Fo...</div>
<div class="t" id="t108" style="top:244.19px;left:420px;letter-spacing:0.647px;">3*</div>
<div class="t" id="t109" style="top:244.19px;left:460px;letter-spacing:-0.441px;">Roomonly</div>
<div class="t" id="t110" style="top:244.19px;left:535px;letter-spacing:-0.257px;">Standard</div>
<div class="t" id="t111" style="top:244.19px;left:625px;letter-spacing:-0.474px;">Wed</div>
<div class="t" id="t112" style="top:244.19px;left:660px;letter-spacing:-0.056px;">12/07/2017</div>
<div class="t" id="t113" style="top:244.19px;left:728px;letter-spacing:-0.469px;">Mon</div>
<div class="t" id="t114" style="top:244.19px;left:763px;letter-spacing:-0.006px;">17/07/2017</div>
<div class="t" id="t115" style="top:244.19px;left:831px;letter-spacing:0.119px;">Tourico ...</div>
<div class="t" id="t116" style="top:244.19px;left:1223px;transform:scaleX(0.8133);transform-origin:0 0;">XML</div>
<div class="t" id="t117" style="top:244.19px;right:571px;letter-spacing:-0.043px;">653.40</div>
<div class="t" id="t118" style="top:244.19px;right:516px;letter-spacing:-0.043px;">163.35</div>
<div class="t" id="t119" style="top:244.19px;right:451px;letter-spacing:-0.043px;">653.40</div>
<div class="t" id="t120" style="top:244.19px;right:396px;letter-spacing:-0.005px;">0.00</div>
<div class="abs " style="left:224px;top:259px;width:1350px;height:15px;background:#08246b;"></div>
<div class="abs " style="left:224px;top:259px;width:1350px;height:1px;background:#001463;"></div>
<div class="abs " style="left:224px;top:273px;width:1350px;height:1px;background:#001463;"></div>
<div class="t" id="t121" style="top:259.19px;left:225px;color:#fff;letter-spacing:-0.037px;">Naples Are...</div>
<div class="t" id="t122" style="top:259.19px;left:300px;color:#fff;letter-spacing:-0.208px;">Bellasera Resort</div>
<div class="t" id="t123" style="top:259.19px;left:420px;color:#fff;letter-spacing:-0.208px;">4 Stars</div>
<div class="t" id="t124" style="top:259.19px;left:460px;color:#fff;letter-spacing:-0.448px;">Room Only</div>
<div class="t" id="t125" style="top:259.19px;left:535px;color:#fff;letter-spacing:-0.069px;">Suite One Bedr...</div>
<div class="t" id="t126" style="top:259.19px;left:625px;color:#fff;letter-spacing:-0.474px;">Wed</div>
<div class="t" id="t127" style="top:259.19px;left:660px;color:#fff;letter-spacing:-0.056px;">12/07/2017</div>
<div class="t" id="t128" style="top:259.19px;left:728px;color:#fff;letter-spacing:-0.469px;">Mon</div>
<div class="t" id="t129" style="top:259.19px;left:763px;color:#fff;letter-spacing:-0.006px;">17/07/2017</div>
<div class="t" id="t130" style="top:259.19px;left:831px;color:#fff;letter-spacing:-0.239px;">Hotelbeds</div>
<div class="t" id="t131" style="top:259.19px;left:1223px;color:#fff;transform:scaleX(0.8133);transform-origin:0 0;">XML</div>
<div class="t" id="t132" style="top:259.19px;right:571px;color:#fff;letter-spacing:-0.043px;">861.92</div>
<div class="t" id="t133" style="top:259.19px;right:516px;color:#fff;letter-spacing:-0.043px;">215.48</div>
<div class="t" id="t134" style="top:259.19px;right:451px;color:#fff;letter-spacing:-0.043px;">861.92</div>
<div class="t" id="t135" style="top:259.19px;right:396px;color:#fff;letter-spacing:-0.005px;">0.00</div>
<div class="abs " style="left:224px;top:274px;width:1133px;height:14px;background:#bddfff;"></div>
<div class="abs " style="left:224px;top:288px;width:1350px;height:1px;background:#d6d3ce;"></div>
<div class="t" id="t136" style="top:274.19px;left:225px;letter-spacing:-0.037px;">Naples Are...</div>
<div class="t" id="t137" style="top:274.19px;left:300px;letter-spacing:-0.208px;">Bellasera Resort</div>
<div class="t" id="t138" style="top:274.19px;left:420px;letter-spacing:-0.014px;">4star</div>
<div class="t" id="t139" style="top:274.19px;left:460px;letter-spacing:-0.448px;">Room Only</div>
<div class="t" id="t140" style="top:274.19px;left:535px;letter-spacing:-0.053px;">Two Bedroom ...</div>
<div class="t" id="t141" style="top:274.19px;left:625px;letter-spacing:-0.474px;">Wed</div>
<div class="t" id="t142" style="top:274.19px;left:660px;letter-spacing:-0.056px;">12/07/2017</div>
<div class="t" id="t143" style="top:274.19px;left:728px;letter-spacing:-0.469px;">Mon</div>
<div class="t" id="t144" style="top:274.19px;left:763px;letter-spacing:-0.006px;">17/07/2017</div>
<div class="t" id="t145" style="top:274.19px;left:831px;letter-spacing:-0.230px;">Bonotel</div>
<div class="t" id="t146" style="top:274.19px;left:1223px;transform:scaleX(0.8133);transform-origin:0 0;">XML</div>
<div class="t" id="t147" style="top:274.19px;right:571px;letter-spacing:-0.043px;">980.60</div>
<div class="t" id="t148" style="top:274.19px;right:516px;letter-spacing:-0.043px;">245.15</div>
<div class="t" id="t149" style="top:274.19px;right:451px;letter-spacing:-0.043px;">980.60</div>
<div class="t" id="t150" style="top:274.19px;right:396px;letter-spacing:-0.005px;">0.00</div>
<div class="abs " style="left:224px;top:289px;width:1133px;height:14px;background:#bddfff;"></div>
<div class="abs " style="left:224px;top:303px;width:1350px;height:1px;background:#d6d3ce;"></div>
<div class="t" id="t151" style="top:289.19px;left:225px;letter-spacing:-0.037px;">Naples Are...</div>
<div class="t" id="t152" style="top:289.19px;left:300px;letter-spacing:-0.208px;">Bellasera Resort</div>
<div class="t" id="t153" style="top:289.19px;left:420px;letter-spacing:-0.208px;">4 Stars</div>
<div class="t" id="t154" style="top:289.19px;left:460px;letter-spacing:-0.448px;">Room Only</div>
<div class="t" id="t155" style="top:289.19px;left:535px;letter-spacing:-0.022px;">Suite Two Bedr...</div>
<div class="t" id="t156" style="top:289.19px;left:625px;letter-spacing:-0.474px;">Wed</div>
<div class="t" id="t157" style="top:289.19px;left:660px;letter-spacing:-0.056px;">12/07/2017</div>
<div class="t" id="t158" style="top:289.19px;left:728px;letter-spacing:-0.469px;">Mon</div>
<div class="t" id="t159" style="top:289.19px;left:763px;letter-spacing:-0.006px;">17/07/2017</div>
<div class="t" id="t160" style="top:289.19px;left:831px;letter-spacing:-0.239px;">Hotelbeds</div>
<div class="t" id="t161" style="top:289.19px;left:1223px;transform:scaleX(0.8133);transform-origin:0 0;">XML</div>
<div class="t" id="t162" style="top:289.19px;right:571px;letter-spacing:0.021px;">1,016.67</div>
<div class="t" id="t163" style="top:289.19px;right:516px;letter-spacing:-0.043px;">254.17</div>
<div class="t" id="t164" style="top:289.19px;right:451px;letter-spacing:0.021px;">1,016.67</div>
<div class="t" id="t165" style="top:289.19px;right:396px;letter-spacing:-0.005px;">0.00</div>
<div class="abs " style="left:224px;top:304px;width:1133px;height:14px;background:#bddfff;"></div>
<div class="abs " style="left:224px;top:318px;width:1350px;height:1px;background:#d6d3ce;"></div>
<div class="t" id="t166" style="top:304.19px;left:225px;letter-spacing:-0.037px;">Naples Are...</div>
<div class="t" id="t167" style="top:304.19px;left:300px;letter-spacing:-0.208px;">Bellasera Resort</div>
<div class="t" id="t168" style="top:304.19px;left:420px;letter-spacing:-0.014px;">4star</div>
<div class="t" id="t169" style="top:304.19px;left:460px;letter-spacing:-0.448px;">Room Only</div>
<div class="t" id="t170" style="top:304.19px;left:535px;letter-spacing:-0.029px;">Three Bedroo...</div>
<div class="t" id="t171" style="top:304.19px;left:625px;letter-spacing:-0.474px;">Wed</div>
<div class="t" id="t172" style="top:304.19px;left:660px;letter-spacing:-0.056px;">12/07/2017</div>
<div class="t" id="t173" style="top:304.19px;left:728px;letter-spacing:-0.469px;">Mon</div>
<div class="t" id="t174" style="top:304.19px;left:763px;letter-spacing:-0.006px;">17/07/2017</div>
<div class="t" id="t175" style="top:304.19px;left:831px;letter-spacing:-0.230px;">Bonotel</div>
<div class="t" id="t176" style="top:304.19px;left:1223px;transform:scaleX(0.8133);transform-origin:0 0;">XML</div>
<div class="t" id="t177" style="top:304.19px;right:571px;letter-spacing:0.021px;">1,217.29</div>
<div class="t" id="t178" style="top:304.19px;right:516px;letter-spacing:-0.043px;">304.32</div>
<div class="t" id="t179" style="top:304.19px;right:451px;letter-spacing:0.021px;">1,217.29</div>
<div class="t" id="t180" style="top:304.19px;right:396px;letter-spacing:-0.005px;">0.00</div>
<div class="abs " style="left:224px;top:319px;width:1133px;height:14px;background:#bddfff;"></div>
<div class="abs " style="left:224px;top:333px;width:1350px;height:1px;background:#d6d3ce;"></div>
<div class="t" id="t181" style="top:319.19px;left:225px;letter-spacing:-0.037px;">Naples Are...</div>
<div class="t" id="t182" style="top:319.19px;left:300px;letter-spacing:-0.208px;">Bellasera Resort</div>
<div class="t" id="t183" style="top:319.19px;left:420px;letter-spacing:-0.208px;">4 Stars</div>
<div class="t" id="t184" style="top:319.19px;left:460px;letter-spacing:-0.448px;">Room Only</div>
<div class="t" id="t185" style="top:319.19px;left:535px;letter-spacing:-0.080px;">Suite Three Be...</div>
<div class="t" id="t186" style="top:319.19px;left:625px;letter-spacing:-0.474px;">Wed</div>
<div class="t" id="t187" style="top:319.19px;left:660px;letter-spacing:-0.056px;">12/07/2017</div>
<div class="t" id="t188" style="top:319.19px;left:728px;letter-spacing:-0.469px;">Mon</div>
<div class="t" id="t189" style="top:319.19px;left:763px;letter-spacing:-0.006px;">17/07/2017</div>
<div class="t" id="t190" style="top:319.19px;left:831px;letter-spacing:-0.239px;">Hotelbeds</div>
<div class="t" id="t191" style="top:319.19px;left:1223px;transform:scaleX(0.8133);transform-origin:0 0;">XML</div>
<div class="t" id="t192" style="top:319.19px;right:571px;letter-spacing:0.021px;">1,260.04</div>
<div class="t" id="t193" style="top:319.19px;right:516px;letter-spacing:-0.043px;">315.01</div>
<div class="t" id="t194" style="top:319.19px;right:451px;letter-spacing:0.021px;">1,260.04</div>
<div class="t" id="t195" style="top:319.19px;right:396px;letter-spacing:-0.005px;">0.00</div>
<div class="abs " style="left:298px;top:199px;width:1px;height:60px;background:#d6d3ce;"></div>
<div class="abs " style="left:298px;top:274px;width:1px;height:60px;background:#d6d3ce;"></div>
<div class="abs " style="left:418px;top:199px;width:1px;height:60px;background:#d6d3ce;"></div>
<div class="abs " style="left:418px;top:274px;width:1px;height:60px;background:#d6d3ce;"></div>
<div class="abs " style="left:458px;top:199px;width:1px;height:60px;background:#d6d3ce;"></div>
<div class="abs " style="left:458px;top:274px;width:1px;height:60px;background:#d6d3ce;"></div>
<div class="abs " style="left:533px;top:199px;width:1px;height:60px;background:#d6d3ce;"></div>
<div class="abs " style="left:533px;top:274px;width:1px;height:60px;background:#d6d3ce;"></div>
<div class="abs " style="left:623px;top:199px;width:1px;height:60px;background:#d6d3ce;"></div>
<div class="abs " style="left:623px;top:274px;width:1px;height:60px;background:#d6d3ce;"></div>
<div class="abs " style="left:658px;top:199px;width:1px;height:60px;background:#d6d3ce;"></div>
<div class="abs " style="left:658px;top:274px;width:1px;height:60px;background:#d6d3ce;"></div>
<div class="abs " style="left:726px;top:199px;width:1px;height:60px;background:#d6d3ce;"></div>
<div class="abs " style="left:726px;top:274px;width:1px;height:60px;background:#d6d3ce;"></div>
<div class="abs " style="left:761px;top:199px;width:1px;height:60px;background:#d6d3ce;"></div>
<div class="abs " style="left:761px;top:274px;width:1px;height:60px;background:#d6d3ce;"></div>
<div class="abs " style="left:829px;top:199px;width:1px;height:60px;background:#d6d3ce;"></div>
<div class="abs " style="left:829px;top:274px;width:1px;height:60px;background:#d6d3ce;"></div>
<div class="abs " style="left:891px;top:199px;width:1px;height:60px;background:#d6d3ce;"></div>
<div class="abs " style="left:891px;top:274px;width:1px;height:60px;background:#d6d3ce;"></div>
<div class="abs " style="left:916px;top:199px;width:1px;height:60px;background:#d6d3ce;"></div>
<div class="abs " style="left:916px;top:274px;width:1px;height:60px;background:#d6d3ce;"></div>
<div class="abs " style="left:941px;top:199px;width:1px;height:60px;background:#d6d3ce;"></div>
<div class="abs " style="left:941px;top:274px;width:1px;height:60px;background:#d6d3ce;"></div>
<div class="abs " style="left:966px;top:199px;width:1px;height:60px;background:#d6d3ce;"></div>
<div class="abs " style="left:966px;top:274px;width:1px;height:60px;background:#d6d3ce;"></div>
<div class="abs " style="left:1021px;top:199px;width:1px;height:60px;background:#d6d3ce;"></div>
<div class="abs " style="left:1021px;top:274px;width:1px;height:60px;background:#d6d3ce;"></div>
<div class="abs " style="left:1076px;top:199px;width:1px;height:60px;background:#d6d3ce;"></div>
<div class="abs " style="left:1076px;top:274px;width:1px;height:60px;background:#d6d3ce;"></div>
<div class="abs " style="left:1141px;top:199px;width:1px;height:60px;background:#d6d3ce;"></div>
<div class="abs " style="left:1141px;top:274px;width:1px;height:60px;background:#d6d3ce;"></div>
<div class="abs " style="left:1196px;top:199px;width:1px;height:60px;background:#d6d3ce;"></div>
<div class="abs " style="left:1196px;top:274px;width:1px;height:60px;background:#d6d3ce;"></div>
<div class="abs " style="left:1221px;top:199px;width:1px;height:60px;background:#d6d3ce;"></div>
<div class="abs " style="left:1221px;top:274px;width:1px;height:60px;background:#d6d3ce;"></div>
<div class="abs " style="left:1281px;top:199px;width:1px;height:60px;background:#d6d3ce;"></div>
<div class="abs " style="left:1281px;top:274px;width:1px;height:60px;background:#d6d3ce;"></div>
<div class="abs " style="left:1356px;top:199px;width:1px;height:60px;background:#d6d3ce;"></div>
<div class="abs " style="left:1356px;top:274px;width:1px;height:60px;background:#d6d3ce;"></div>
<div class="t" id="t196" style="top:809.19px;left:226.5px;">First portion: 4.7 sec, total search time: 4.7 sec</div>
<div class="abs " style="left:1564px;top:805px;width:10px;height:23px;background:#d6d3ce;border-left:1px solid #fff;border-top:1px solid #fff;border-bottom:1px solid #424142;box-shadow:inset 0 -1px 0 #848284;"></div>
<div class="abs " style="left:1573px;top:813px;width:1px;height:1px;background:#1050c0;"></div>
<div class="abs " style="left:1573px;top:820px;width:1px;height:1px;background:#1050c0;"></div>
<div class="abs " style="left:1574px;top:27px;width:15px;height:804px;background:linear-gradient(90deg,#fff 0,#fff 1px,#eeeeee 1px,#f0f0f0 3px,#f2f2f2 15px);"></div>
<div class="abs " style="left:1574px;top:27px;width:15px;height:1px;background:#fafafa;"></div>
<svg class="abs" style="left:1580px;top:34px;" width="7" height="4" viewBox="0 0 7 4"><defs><linearGradient id="ag" x1="0" x2="1"><stop offset="0" stop-color="#202020"/><stop offset="1" stop-color="#909090"/></linearGradient></defs><path d="M0 4 L3.5 0 L7 4Z" fill="url(#ag)"/></svg>
<div class="abs" style="left:1575px;top:45px;width:20px;height:685px;border:1px solid #8f8f8f;border-radius:2px;background:linear-gradient(90deg,#f6f6f6 0,#ebebec 5px,#d4d4d8 9px,#bcbcc4 14px);box-shadow:inset 1px 1px 0 #fff"></div>
<div class="abs " style="left:1579px;top:384px;width:7px;height:1px;background:#f8f8f8;"></div>
<div class="abs " style="left:1579px;top:385px;width:7px;height:1px;background:linear-gradient(90deg,#303038,#808088);"></div>
<div class="abs " style="left:1579px;top:387px;width:7px;height:1px;background:#f8f8f8;"></div>
<div class="abs " style="left:1579px;top:388px;width:7px;height:1px;background:linear-gradient(90deg,#303038,#808088);"></div>
<div class="abs " style="left:1579px;top:390px;width:7px;height:1px;background:#f8f8f8;"></div>
<div class="abs " style="left:1579px;top:391px;width:7px;height:1px;background:linear-gradient(90deg,#303038,#808088);"></div>
<svg class="abs" style="left:1580px;top:821px;" width="7" height="4" viewBox="0 0 7 4"><path d="M0 0 L7 0 L3.5 4Z" fill="url(#ag)"/></svg>
<div class="abs " style="left:4px;top:831px;width:1585px;height:17px;background:linear-gradient(180deg,#fafafa 0,#eeeeee 1px,#f0f0f0 3px,#f2f2f2 17px);"></div>
<svg class="abs" style="left:10px;top:835px;" width="5" height="8" viewBox="0 0 5 8"><defs><linearGradient id="ah" x1="0" x2="0" y1="0" y2="1"><stop offset="0" stop-color="#202020"/><stop offset="1" stop-color="#909090"/></linearGradient></defs><path d="M5 0 L5 8 L0 4Z" fill="url(#ah)"/></svg>
<div class="abs" style="left:22px;top:832px;width:1505px;height:15px;border:1px solid #8f8f8f;border-radius:2px;background:linear-gradient(180deg,#f6f6f6 0,#e9e9ea 6px,#d2d2d6 8px,#c2c2ca 14px);box-shadow:inset 1px 1px 0 #fff"></div>
<div class="abs " style="left:770px;top:836px;width:1px;height:8px;background:linear-gradient(180deg,#303038,#88888e);"></div>
<div class="abs " style="left:771px;top:836px;width:1px;height:8px;background:#f8f8f8;"></div>
<div class="abs " style="left:773px;top:836px;width:1px;height:8px;background:linear-gradient(180deg,#303038,#88888e);"></div>
<div class="abs " style="left:774px;top:836px;width:1px;height:8px;background:#f8f8f8;"></div>
<div class="abs " style="left:776px;top:836px;width:1px;height:8px;background:linear-gradient(180deg,#303038,#88888e);"></div>
<div class="abs " style="left:777px;top:836px;width:1px;height:8px;background:#f8f8f8;"></div>
<svg class="abs" style="left:1564px;top:835px;" width="5" height="8" viewBox="0 0 5 8"><path d="M0 0 L0 8 L5 4Z" fill="url(#ah)"/></svg>
<div class="abs " style="left:1574px;top:831px;width:15px;height:17px;background:#f0f0f0;"></div>
<div class="abs " style="left:1586px;top:838px;width:2px;height:2px;background:#c0c0c0;"></div>
<div class="abs " style="left:1587px;top:839px;width:1px;height:1px;background:#fff;"></div>
<div class="abs " style="left:1583px;top:841px;width:2px;height:2px;background:#c0c0c0;"></div>
<div class="abs " style="left:1584px;top:842px;width:1px;height:1px;background:#fff;"></div>
<div class="abs " style="left:1586px;top:841px;width:2px;height:2px;background:#c0c0c0;"></div>
<div class="abs " style="left:1587px;top:842px;width:1px;height:1px;background:#fff;"></div>
<div class="abs " style="left:1580px;top:844px;width:2px;height:2px;background:#c0c0c0;"></div>
<div class="abs " style="left:1581px;top:845px;width:1px;height:1px;background:#fff;"></div>
<div class="abs " style="left:1583px;top:844px;width:2px;height:2px;background:#c0c0c0;"></div>
<div class="abs " style="left:1584px;top:845px;width:1px;height:1px;background:#fff;"></div>
<div class="abs " style="left:1586px;top:844px;width:2px;height:2px;background:#c0c0c0;"></div>
<div class="abs " style="left:1587px;top:845px;width:1px;height:1px;background:#fff;"></div>
</div>
</body>
</html>
